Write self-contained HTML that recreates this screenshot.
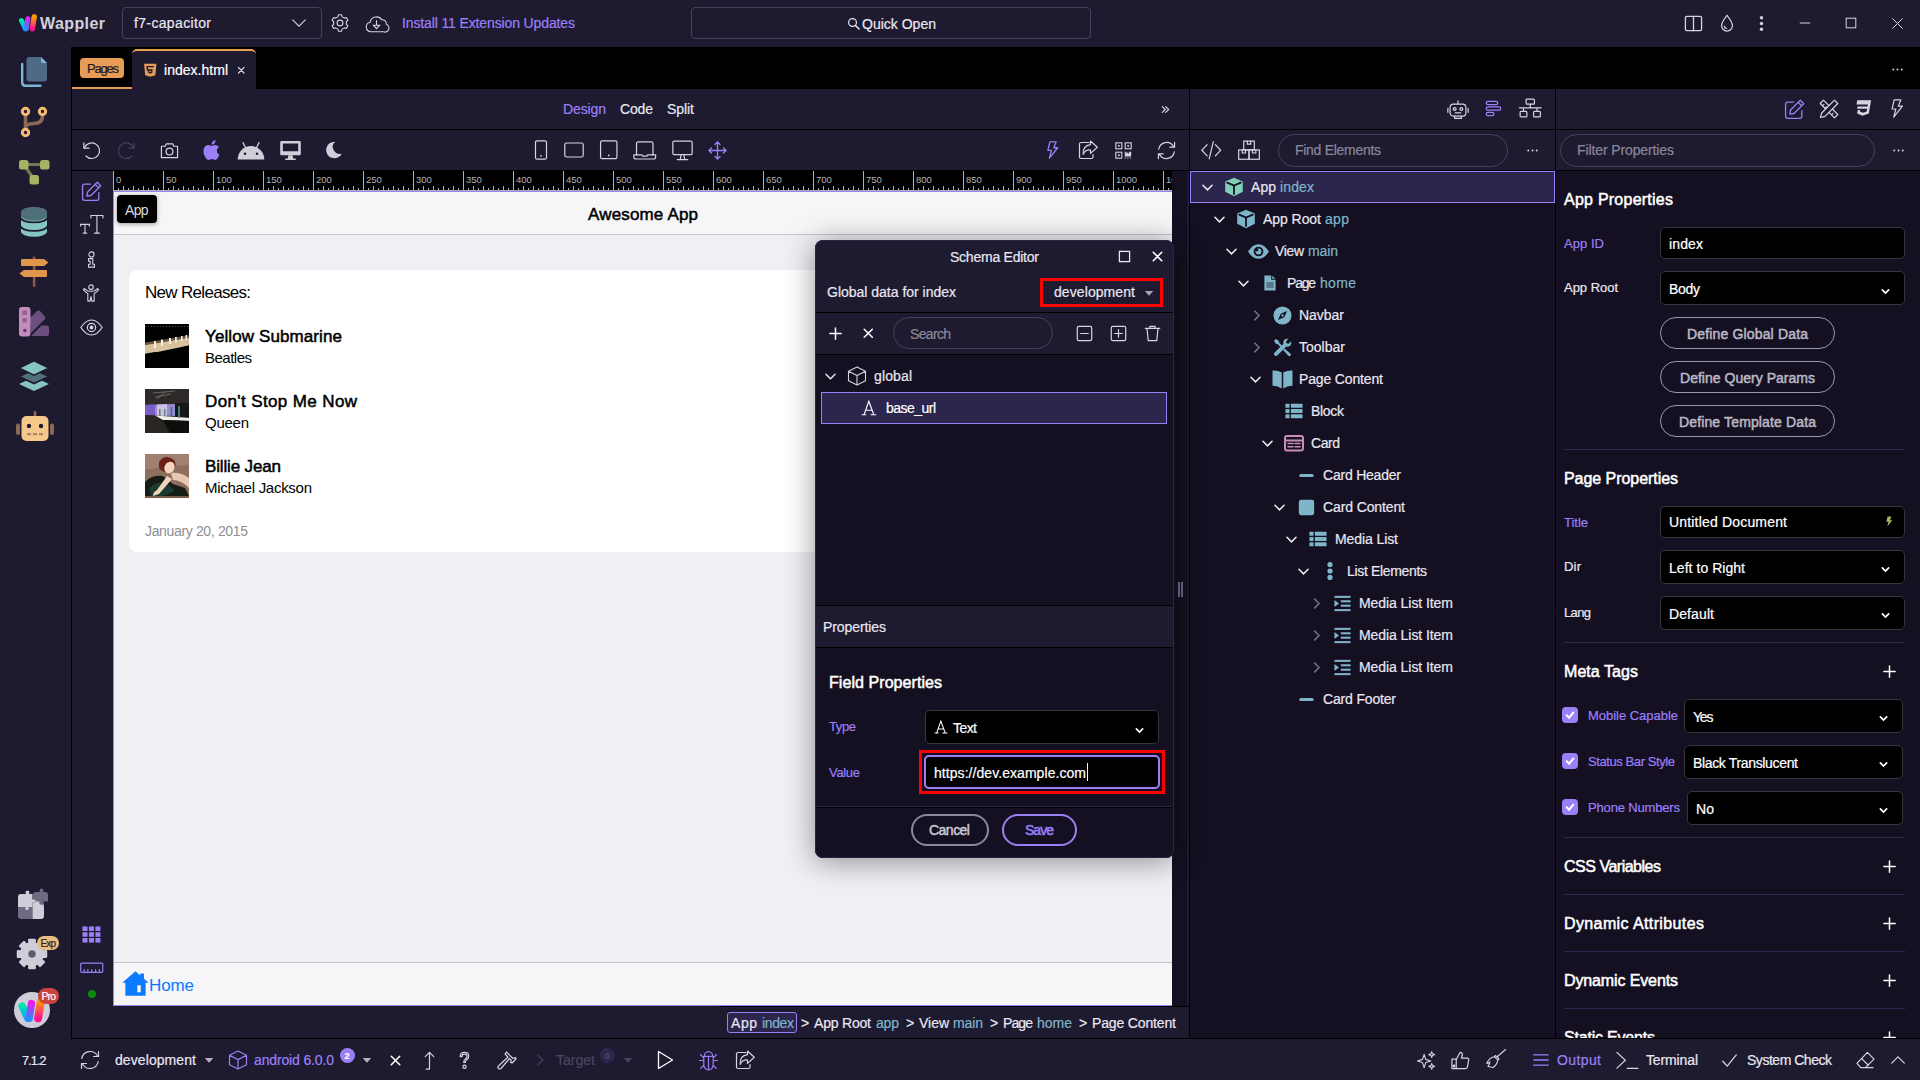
<!DOCTYPE html>
<html lang="en"><head><meta charset="utf-8"><title>Wappler</title><style>
html,body{margin:0;padding:0;}
body{width:1920px;height:1080px;overflow:hidden;background:#1e1a30;font-family:'Liberation Sans', sans-serif;position:relative;}
div,span.t,svg{position:absolute;box-sizing:border-box;}
span.t{white-space:pre;-webkit-text-stroke:0.2px currentColor;}
svg{overflow:visible;}
</style></head>
<body>
<div style="left:0px;top:0px;width:1920px;height:47px;background:#1e1a30;"></div>
<div style="left:72px;top:47px;width:1848px;height:42px;background:#000;"></div>
<div style="left:0px;top:47px;width:71px;height:1033px;background:#1e1a30;"></div>
<div style="left:71px;top:47px;width:1px;height:992px;background:#000;"></div>
<div style="left:72px;top:129px;width:1848px;height:1px;background:#000;"></div>
<div style="left:72px;top:170px;width:1848px;height:1px;background:#000;"></div>
<div style="left:72px;top:171px;width:41px;height:867px;background:#1e1a30;"></div>
<div style="left:113px;top:171px;width:1076px;height:835px;background:#141021;"></div>
<div style="left:113px;top:170px;width:1059px;height:21px;background:#000;"></div>
<div style="left:1189px;top:89px;width:1px;height:950px;background:#000;"></div>
<div style="left:1555px;top:89px;width:1px;height:950px;background:#000;"></div>
<div style="left:1190px;top:171px;width:365px;height:867px;background:#141021;"></div>
<div style="left:1556px;top:171px;width:364px;height:867px;background:#141021;"></div>
<div style="left:1187px;top:171px;width:2px;height:836px;background:#1e1a30;"></div>
<div style="left:719px;top:1006px;width:470px;height:1px;background:#000;"></div>
<div style="left:72px;top:1007px;width:1117px;height:31px;background:#1e1a30;"></div>
<div style="left:71px;top:1038px;width:1849px;height:1px;background:#000;"></div>
<div style="left:0px;top:1039px;width:1920px;height:41px;background:#1e1a30;"></div>
<span class="t" style="left:40px;top:16px;font-size:16px;line-height:16px;color:#d3d1dc;font-weight:700;letter-spacing:0.411px;-webkit-text-stroke:0;">Wappler</span>
<div style="left:122px;top:7px;width:200px;height:32px;border:1px solid #46425a;border-radius:4px;"></div>
<span class="t" style="left:134px;top:16px;font-size:14px;line-height:14px;color:#e9e7f1;letter-spacing:0.349px;">f7-capacitor</span>
<span class="t" style="left:402px;top:16px;font-size:14px;line-height:14px;color:#9b7ff7;letter-spacing:-0.126px;">Install 11 Extension Updates</span>
<div style="left:691px;top:7px;width:400px;height:32px;border:1px solid #46425a;border-radius:4px;"></div>
<span class="t" style="left:862px;top:17px;font-size:14px;line-height:14px;color:#e9e7f1;letter-spacing:0.007px;">Quick Open</span>
<div style="left:72px;top:87px;width:60px;height:2px;background:#e79c55;"></div>
<div style="left:80px;top:58px;width:44px;height:20px;background:#e79c55;border-radius:4px;"></div>
<span class="t" style="left:87px;top:62px;font-size:13px;line-height:13px;color:#1b1726;letter-spacing:-1.200px;">Pages</span>
<div style="left:132px;top:49px;width:124px;height:40px;background:#1e1a30;border-top:2px solid #e79c55;border-radius:5px 5px 0 0;"></div>
<span class="t" style="left:164px;top:63px;font-size:14px;line-height:14px;color:#fff;letter-spacing:0.021px;">index.html</span>
<span class="t" style="left:563px;top:102px;font-size:14px;line-height:14px;color:#9b7ff7;letter-spacing:-0.119px;">Design</span>
<span class="t" style="left:620px;top:102px;font-size:14px;line-height:14px;color:#e9e7f1;letter-spacing:-0.156px;">Code</span>
<span class="t" style="left:667px;top:102px;font-size:14px;line-height:14px;color:#e9e7f1;letter-spacing:-0.059px;">Split</span>
<svg style="left:113px;top:170px;overflow:hidden" width="1059" height="21"><rect x="0" y="1" width="1" height="20" fill="#b3b1a8"/><rect x="5" y="18" width="1" height="3" fill="#b3b1a8"/><rect x="10" y="16" width="1" height="5" fill="#b3b1a8"/><rect x="15" y="18" width="1" height="3" fill="#b3b1a8"/><rect x="20" y="16" width="1" height="5" fill="#b3b1a8"/><rect x="25" y="18" width="1" height="3" fill="#b3b1a8"/><rect x="30" y="16" width="1" height="5" fill="#b3b1a8"/><rect x="35" y="18" width="1" height="3" fill="#b3b1a8"/><rect x="40" y="16" width="1" height="5" fill="#b3b1a8"/><rect x="45" y="18" width="1" height="3" fill="#b3b1a8"/><rect x="50" y="1" width="1" height="20" fill="#b3b1a8"/><rect x="55" y="18" width="1" height="3" fill="#b3b1a8"/><rect x="60" y="16" width="1" height="5" fill="#b3b1a8"/><rect x="65" y="18" width="1" height="3" fill="#b3b1a8"/><rect x="70" y="16" width="1" height="5" fill="#b3b1a8"/><rect x="75" y="18" width="1" height="3" fill="#b3b1a8"/><rect x="80" y="16" width="1" height="5" fill="#b3b1a8"/><rect x="85" y="18" width="1" height="3" fill="#b3b1a8"/><rect x="90" y="16" width="1" height="5" fill="#b3b1a8"/><rect x="95" y="18" width="1" height="3" fill="#b3b1a8"/><rect x="100" y="1" width="1" height="20" fill="#b3b1a8"/><rect x="105" y="18" width="1" height="3" fill="#b3b1a8"/><rect x="110" y="16" width="1" height="5" fill="#b3b1a8"/><rect x="115" y="18" width="1" height="3" fill="#b3b1a8"/><rect x="120" y="16" width="1" height="5" fill="#b3b1a8"/><rect x="125" y="18" width="1" height="3" fill="#b3b1a8"/><rect x="130" y="16" width="1" height="5" fill="#b3b1a8"/><rect x="135" y="18" width="1" height="3" fill="#b3b1a8"/><rect x="140" y="16" width="1" height="5" fill="#b3b1a8"/><rect x="145" y="18" width="1" height="3" fill="#b3b1a8"/><rect x="150" y="1" width="1" height="20" fill="#b3b1a8"/><rect x="155" y="18" width="1" height="3" fill="#b3b1a8"/><rect x="160" y="16" width="1" height="5" fill="#b3b1a8"/><rect x="165" y="18" width="1" height="3" fill="#b3b1a8"/><rect x="170" y="16" width="1" height="5" fill="#b3b1a8"/><rect x="175" y="18" width="1" height="3" fill="#b3b1a8"/><rect x="180" y="16" width="1" height="5" fill="#b3b1a8"/><rect x="185" y="18" width="1" height="3" fill="#b3b1a8"/><rect x="190" y="16" width="1" height="5" fill="#b3b1a8"/><rect x="195" y="18" width="1" height="3" fill="#b3b1a8"/><rect x="200" y="1" width="1" height="20" fill="#b3b1a8"/><rect x="205" y="18" width="1" height="3" fill="#b3b1a8"/><rect x="210" y="16" width="1" height="5" fill="#b3b1a8"/><rect x="215" y="18" width="1" height="3" fill="#b3b1a8"/><rect x="220" y="16" width="1" height="5" fill="#b3b1a8"/><rect x="225" y="18" width="1" height="3" fill="#b3b1a8"/><rect x="230" y="16" width="1" height="5" fill="#b3b1a8"/><rect x="235" y="18" width="1" height="3" fill="#b3b1a8"/><rect x="240" y="16" width="1" height="5" fill="#b3b1a8"/><rect x="245" y="18" width="1" height="3" fill="#b3b1a8"/><rect x="250" y="1" width="1" height="20" fill="#b3b1a8"/><rect x="255" y="18" width="1" height="3" fill="#b3b1a8"/><rect x="260" y="16" width="1" height="5" fill="#b3b1a8"/><rect x="265" y="18" width="1" height="3" fill="#b3b1a8"/><rect x="270" y="16" width="1" height="5" fill="#b3b1a8"/><rect x="275" y="18" width="1" height="3" fill="#b3b1a8"/><rect x="280" y="16" width="1" height="5" fill="#b3b1a8"/><rect x="285" y="18" width="1" height="3" fill="#b3b1a8"/><rect x="290" y="16" width="1" height="5" fill="#b3b1a8"/><rect x="295" y="18" width="1" height="3" fill="#b3b1a8"/><rect x="300" y="1" width="1" height="20" fill="#b3b1a8"/><rect x="305" y="18" width="1" height="3" fill="#b3b1a8"/><rect x="310" y="16" width="1" height="5" fill="#b3b1a8"/><rect x="315" y="18" width="1" height="3" fill="#b3b1a8"/><rect x="320" y="16" width="1" height="5" fill="#b3b1a8"/><rect x="325" y="18" width="1" height="3" fill="#b3b1a8"/><rect x="330" y="16" width="1" height="5" fill="#b3b1a8"/><rect x="335" y="18" width="1" height="3" fill="#b3b1a8"/><rect x="340" y="16" width="1" height="5" fill="#b3b1a8"/><rect x="345" y="18" width="1" height="3" fill="#b3b1a8"/><rect x="350" y="1" width="1" height="20" fill="#b3b1a8"/><rect x="355" y="18" width="1" height="3" fill="#b3b1a8"/><rect x="360" y="16" width="1" height="5" fill="#b3b1a8"/><rect x="365" y="18" width="1" height="3" fill="#b3b1a8"/><rect x="370" y="16" width="1" height="5" fill="#b3b1a8"/><rect x="375" y="18" width="1" height="3" fill="#b3b1a8"/><rect x="380" y="16" width="1" height="5" fill="#b3b1a8"/><rect x="385" y="18" width="1" height="3" fill="#b3b1a8"/><rect x="390" y="16" width="1" height="5" fill="#b3b1a8"/><rect x="395" y="18" width="1" height="3" fill="#b3b1a8"/><rect x="400" y="1" width="1" height="20" fill="#b3b1a8"/><rect x="405" y="18" width="1" height="3" fill="#b3b1a8"/><rect x="410" y="16" width="1" height="5" fill="#b3b1a8"/><rect x="415" y="18" width="1" height="3" fill="#b3b1a8"/><rect x="420" y="16" width="1" height="5" fill="#b3b1a8"/><rect x="425" y="18" width="1" height="3" fill="#b3b1a8"/><rect x="430" y="16" width="1" height="5" fill="#b3b1a8"/><rect x="435" y="18" width="1" height="3" fill="#b3b1a8"/><rect x="440" y="16" width="1" height="5" fill="#b3b1a8"/><rect x="445" y="18" width="1" height="3" fill="#b3b1a8"/><rect x="450" y="1" width="1" height="20" fill="#b3b1a8"/><rect x="455" y="18" width="1" height="3" fill="#b3b1a8"/><rect x="460" y="16" width="1" height="5" fill="#b3b1a8"/><rect x="465" y="18" width="1" height="3" fill="#b3b1a8"/><rect x="470" y="16" width="1" height="5" fill="#b3b1a8"/><rect x="475" y="18" width="1" height="3" fill="#b3b1a8"/><rect x="480" y="16" width="1" height="5" fill="#b3b1a8"/><rect x="485" y="18" width="1" height="3" fill="#b3b1a8"/><rect x="490" y="16" width="1" height="5" fill="#b3b1a8"/><rect x="495" y="18" width="1" height="3" fill="#b3b1a8"/><rect x="500" y="1" width="1" height="20" fill="#b3b1a8"/><rect x="505" y="18" width="1" height="3" fill="#b3b1a8"/><rect x="510" y="16" width="1" height="5" fill="#b3b1a8"/><rect x="515" y="18" width="1" height="3" fill="#b3b1a8"/><rect x="520" y="16" width="1" height="5" fill="#b3b1a8"/><rect x="525" y="18" width="1" height="3" fill="#b3b1a8"/><rect x="530" y="16" width="1" height="5" fill="#b3b1a8"/><rect x="535" y="18" width="1" height="3" fill="#b3b1a8"/><rect x="540" y="16" width="1" height="5" fill="#b3b1a8"/><rect x="545" y="18" width="1" height="3" fill="#b3b1a8"/><rect x="550" y="1" width="1" height="20" fill="#b3b1a8"/><rect x="555" y="18" width="1" height="3" fill="#b3b1a8"/><rect x="560" y="16" width="1" height="5" fill="#b3b1a8"/><rect x="565" y="18" width="1" height="3" fill="#b3b1a8"/><rect x="570" y="16" width="1" height="5" fill="#b3b1a8"/><rect x="575" y="18" width="1" height="3" fill="#b3b1a8"/><rect x="580" y="16" width="1" height="5" fill="#b3b1a8"/><rect x="585" y="18" width="1" height="3" fill="#b3b1a8"/><rect x="590" y="16" width="1" height="5" fill="#b3b1a8"/><rect x="595" y="18" width="1" height="3" fill="#b3b1a8"/><rect x="600" y="1" width="1" height="20" fill="#b3b1a8"/><rect x="605" y="18" width="1" height="3" fill="#b3b1a8"/><rect x="610" y="16" width="1" height="5" fill="#b3b1a8"/><rect x="615" y="18" width="1" height="3" fill="#b3b1a8"/><rect x="620" y="16" width="1" height="5" fill="#b3b1a8"/><rect x="625" y="18" width="1" height="3" fill="#b3b1a8"/><rect x="630" y="16" width="1" height="5" fill="#b3b1a8"/><rect x="635" y="18" width="1" height="3" fill="#b3b1a8"/><rect x="640" y="16" width="1" height="5" fill="#b3b1a8"/><rect x="645" y="18" width="1" height="3" fill="#b3b1a8"/><rect x="650" y="1" width="1" height="20" fill="#b3b1a8"/><rect x="655" y="18" width="1" height="3" fill="#b3b1a8"/><rect x="660" y="16" width="1" height="5" fill="#b3b1a8"/><rect x="665" y="18" width="1" height="3" fill="#b3b1a8"/><rect x="670" y="16" width="1" height="5" fill="#b3b1a8"/><rect x="675" y="18" width="1" height="3" fill="#b3b1a8"/><rect x="680" y="16" width="1" height="5" fill="#b3b1a8"/><rect x="685" y="18" width="1" height="3" fill="#b3b1a8"/><rect x="690" y="16" width="1" height="5" fill="#b3b1a8"/><rect x="695" y="18" width="1" height="3" fill="#b3b1a8"/><rect x="700" y="1" width="1" height="20" fill="#b3b1a8"/><rect x="705" y="18" width="1" height="3" fill="#b3b1a8"/><rect x="710" y="16" width="1" height="5" fill="#b3b1a8"/><rect x="715" y="18" width="1" height="3" fill="#b3b1a8"/><rect x="720" y="16" width="1" height="5" fill="#b3b1a8"/><rect x="725" y="18" width="1" height="3" fill="#b3b1a8"/><rect x="730" y="16" width="1" height="5" fill="#b3b1a8"/><rect x="735" y="18" width="1" height="3" fill="#b3b1a8"/><rect x="740" y="16" width="1" height="5" fill="#b3b1a8"/><rect x="745" y="18" width="1" height="3" fill="#b3b1a8"/><rect x="750" y="1" width="1" height="20" fill="#b3b1a8"/><rect x="755" y="18" width="1" height="3" fill="#b3b1a8"/><rect x="760" y="16" width="1" height="5" fill="#b3b1a8"/><rect x="765" y="18" width="1" height="3" fill="#b3b1a8"/><rect x="770" y="16" width="1" height="5" fill="#b3b1a8"/><rect x="775" y="18" width="1" height="3" fill="#b3b1a8"/><rect x="780" y="16" width="1" height="5" fill="#b3b1a8"/><rect x="785" y="18" width="1" height="3" fill="#b3b1a8"/><rect x="790" y="16" width="1" height="5" fill="#b3b1a8"/><rect x="795" y="18" width="1" height="3" fill="#b3b1a8"/><rect x="800" y="1" width="1" height="20" fill="#b3b1a8"/><rect x="805" y="18" width="1" height="3" fill="#b3b1a8"/><rect x="810" y="16" width="1" height="5" fill="#b3b1a8"/><rect x="815" y="18" width="1" height="3" fill="#b3b1a8"/><rect x="820" y="16" width="1" height="5" fill="#b3b1a8"/><rect x="825" y="18" width="1" height="3" fill="#b3b1a8"/><rect x="830" y="16" width="1" height="5" fill="#b3b1a8"/><rect x="835" y="18" width="1" height="3" fill="#b3b1a8"/><rect x="840" y="16" width="1" height="5" fill="#b3b1a8"/><rect x="845" y="18" width="1" height="3" fill="#b3b1a8"/><rect x="850" y="1" width="1" height="20" fill="#b3b1a8"/><rect x="855" y="18" width="1" height="3" fill="#b3b1a8"/><rect x="860" y="16" width="1" height="5" fill="#b3b1a8"/><rect x="865" y="18" width="1" height="3" fill="#b3b1a8"/><rect x="870" y="16" width="1" height="5" fill="#b3b1a8"/><rect x="875" y="18" width="1" height="3" fill="#b3b1a8"/><rect x="880" y="16" width="1" height="5" fill="#b3b1a8"/><rect x="885" y="18" width="1" height="3" fill="#b3b1a8"/><rect x="890" y="16" width="1" height="5" fill="#b3b1a8"/><rect x="895" y="18" width="1" height="3" fill="#b3b1a8"/><rect x="900" y="1" width="1" height="20" fill="#b3b1a8"/><rect x="905" y="18" width="1" height="3" fill="#b3b1a8"/><rect x="910" y="16" width="1" height="5" fill="#b3b1a8"/><rect x="915" y="18" width="1" height="3" fill="#b3b1a8"/><rect x="920" y="16" width="1" height="5" fill="#b3b1a8"/><rect x="925" y="18" width="1" height="3" fill="#b3b1a8"/><rect x="930" y="16" width="1" height="5" fill="#b3b1a8"/><rect x="935" y="18" width="1" height="3" fill="#b3b1a8"/><rect x="940" y="16" width="1" height="5" fill="#b3b1a8"/><rect x="945" y="18" width="1" height="3" fill="#b3b1a8"/><rect x="950" y="1" width="1" height="20" fill="#b3b1a8"/><rect x="955" y="18" width="1" height="3" fill="#b3b1a8"/><rect x="960" y="16" width="1" height="5" fill="#b3b1a8"/><rect x="965" y="18" width="1" height="3" fill="#b3b1a8"/><rect x="970" y="16" width="1" height="5" fill="#b3b1a8"/><rect x="975" y="18" width="1" height="3" fill="#b3b1a8"/><rect x="980" y="16" width="1" height="5" fill="#b3b1a8"/><rect x="985" y="18" width="1" height="3" fill="#b3b1a8"/><rect x="990" y="16" width="1" height="5" fill="#b3b1a8"/><rect x="995" y="18" width="1" height="3" fill="#b3b1a8"/><rect x="1000" y="1" width="1" height="20" fill="#b3b1a8"/><rect x="1005" y="18" width="1" height="3" fill="#b3b1a8"/><rect x="1010" y="16" width="1" height="5" fill="#b3b1a8"/><rect x="1015" y="18" width="1" height="3" fill="#b3b1a8"/><rect x="1020" y="16" width="1" height="5" fill="#b3b1a8"/><rect x="1025" y="18" width="1" height="3" fill="#b3b1a8"/><rect x="1030" y="16" width="1" height="5" fill="#b3b1a8"/><rect x="1035" y="18" width="1" height="3" fill="#b3b1a8"/><rect x="1040" y="16" width="1" height="5" fill="#b3b1a8"/><rect x="1045" y="18" width="1" height="3" fill="#b3b1a8"/><rect x="1050" y="1" width="1" height="20" fill="#b3b1a8"/><rect x="1055" y="18" width="1" height="3" fill="#b3b1a8"/><rect x="0" y="20" width="1059" height="1" fill="#b3b1a8"/><text x="3" y="13" font-size="9.5" fill="#b5b4b8" font-family="Liberation Sans, sans-serif">0</text><text x="53" y="13" font-size="9.5" fill="#b5b4b8" font-family="Liberation Sans, sans-serif">50</text><text x="103" y="13" font-size="9.5" fill="#b5b4b8" font-family="Liberation Sans, sans-serif">100</text><text x="153" y="13" font-size="9.5" fill="#b5b4b8" font-family="Liberation Sans, sans-serif">150</text><text x="203" y="13" font-size="9.5" fill="#b5b4b8" font-family="Liberation Sans, sans-serif">200</text><text x="253" y="13" font-size="9.5" fill="#b5b4b8" font-family="Liberation Sans, sans-serif">250</text><text x="303" y="13" font-size="9.5" fill="#b5b4b8" font-family="Liberation Sans, sans-serif">300</text><text x="353" y="13" font-size="9.5" fill="#b5b4b8" font-family="Liberation Sans, sans-serif">350</text><text x="403" y="13" font-size="9.5" fill="#b5b4b8" font-family="Liberation Sans, sans-serif">400</text><text x="453" y="13" font-size="9.5" fill="#b5b4b8" font-family="Liberation Sans, sans-serif">450</text><text x="503" y="13" font-size="9.5" fill="#b5b4b8" font-family="Liberation Sans, sans-serif">500</text><text x="553" y="13" font-size="9.5" fill="#b5b4b8" font-family="Liberation Sans, sans-serif">550</text><text x="603" y="13" font-size="9.5" fill="#b5b4b8" font-family="Liberation Sans, sans-serif">600</text><text x="653" y="13" font-size="9.5" fill="#b5b4b8" font-family="Liberation Sans, sans-serif">650</text><text x="703" y="13" font-size="9.5" fill="#b5b4b8" font-family="Liberation Sans, sans-serif">700</text><text x="753" y="13" font-size="9.5" fill="#b5b4b8" font-family="Liberation Sans, sans-serif">750</text><text x="803" y="13" font-size="9.5" fill="#b5b4b8" font-family="Liberation Sans, sans-serif">800</text><text x="853" y="13" font-size="9.5" fill="#b5b4b8" font-family="Liberation Sans, sans-serif">850</text><text x="903" y="13" font-size="9.5" fill="#b5b4b8" font-family="Liberation Sans, sans-serif">900</text><text x="953" y="13" font-size="9.5" fill="#b5b4b8" font-family="Liberation Sans, sans-serif">950</text><text x="1003" y="13" font-size="9.5" fill="#b5b4b8" font-family="Liberation Sans, sans-serif">1000</text><text x="1053" y="13" font-size="9.5" fill="#b5b4b8" font-family="Liberation Sans, sans-serif">1050</text></svg>
<div style="left:113px;top:191px;width:1059px;height:815px;background:#efeff4;border:1px solid #9b7ff7;border-right:0;"></div>
<div style="left:114px;top:192px;width:1058px;height:43px;background:#f6f6f9;border-bottom:1px solid #c4c4c7;"></div>
<span class="t" style="left:588px;top:206px;font-size:17px;line-height:17px;color:#000;-webkit-text-stroke:0.5px currentColor;letter-spacing:0.163px;">Awesome App</span>
<div style="left:117px;top:195px;width:40px;height:28px;background:#000;border-radius:4px;box-shadow:0 1px 4px rgba(0,0,0,.4);"></div>
<span class="t" style="left:125px;top:203px;font-size:14px;line-height:14px;color:#dcdcdc;letter-spacing:-0.711px;-webkit-text-stroke:0;">App</span>
<div style="left:129px;top:270px;width:1027px;height:282px;background:#fff;border-radius:8px;"></div>
<span class="t" style="left:145px;top:284px;font-size:17px;line-height:17px;color:#000;letter-spacing:-0.694px;-webkit-text-stroke:0;">New Releases:</span>
<span class="t" style="left:205px;top:328px;font-size:17px;line-height:17px;color:#000;-webkit-text-stroke:0.5px currentColor;letter-spacing:0.103px;">Yellow Submarine</span>
<span class="t" style="left:205px;top:350px;font-size:15px;line-height:15px;color:#000;letter-spacing:-0.508px;-webkit-text-stroke:0;">Beatles</span>
<span class="t" style="left:205px;top:393px;font-size:17px;line-height:17px;color:#000;-webkit-text-stroke:0.5px currentColor;letter-spacing:0.380px;">Don&#x27;t Stop Me Now</span>
<span class="t" style="left:205px;top:415px;font-size:15px;line-height:15px;color:#000;letter-spacing:-0.262px;-webkit-text-stroke:0;">Queen</span>
<span class="t" style="left:205px;top:458px;font-size:17px;line-height:17px;color:#000;-webkit-text-stroke:0.5px currentColor;letter-spacing:-0.150px;">Billie Jean</span>
<span class="t" style="left:205px;top:480px;font-size:15px;line-height:15px;color:#000;letter-spacing:-0.278px;-webkit-text-stroke:0;">Michael Jackson</span>
<span class="t" style="left:145px;top:524px;font-size:14px;line-height:14px;color:#8e8e93;letter-spacing:-0.347px;-webkit-text-stroke:0;">January 20, 2015</span>
<div style="left:114px;top:962px;width:1058px;height:43px;background:#f6f6f9;border-top:1px solid #c4c4c7;"></div>
<span class="t" style="left:149px;top:977px;font-size:17px;line-height:17px;color:#0a7aff;letter-spacing:-0.120px;-webkit-text-stroke:0;">Home</span>
<div style="left:727px;top:1012px;width:70px;height:21px;background:#2c254d;border:1px solid #9b7ff7;border-radius:3px;"></div>
<span class="t" style="left:731px;top:1016px;font-size:14px;line-height:14px;color:#e9e7f1;letter-spacing:0.539px;">App</span>
<span class="t" style="left:762px;top:1016px;font-size:14px;line-height:14px;color:#7fb5c9;letter-spacing:-0.367px;">index</span>
<span class="t" style="left:801px;top:1016px;font-size:14px;line-height:14px;color:#e9e7f1;">&gt;</span>
<span class="t" style="left:814px;top:1016px;font-size:14px;line-height:14px;color:#e9e7f1;letter-spacing:-0.196px;">App Root</span>
<span class="t" style="left:876px;top:1016px;font-size:14px;line-height:14px;color:#7fb5c9;letter-spacing:-0.180px;">app</span>
<span class="t" style="left:906px;top:1016px;font-size:14px;line-height:14px;color:#e9e7f1;">&gt;</span>
<span class="t" style="left:919px;top:1016px;font-size:14px;line-height:14px;color:#e9e7f1;letter-spacing:-0.031px;">View</span>
<span class="t" style="left:953px;top:1016px;font-size:14px;line-height:14px;color:#7fb5c9;letter-spacing:-0.120px;">main</span>
<span class="t" style="left:990px;top:1016px;font-size:14px;line-height:14px;color:#e9e7f1;">&gt;</span>
<span class="t" style="left:1003px;top:1016px;font-size:14px;line-height:14px;color:#e9e7f1;letter-spacing:-0.901px;">Page</span>
<span class="t" style="left:1037px;top:1016px;font-size:14px;line-height:14px;color:#7fb5c9;letter-spacing:-0.010px;">home</span>
<span class="t" style="left:1079px;top:1016px;font-size:14px;line-height:14px;color:#e9e7f1;">&gt;</span>
<span class="t" style="left:1092px;top:1016px;font-size:14px;line-height:14px;color:#e9e7f1;letter-spacing:-0.148px;">Page Content</span>
<div style="left:1190px;top:171px;width:365px;height:32px;background:#2c254d;border:1px solid #9b7ff7;"></div>
<span class="t" style="left:1251px;top:180px;font-size:14px;line-height:14px;color:#e9e7f1;letter-spacing:0.039px;">App</span>
<span class="t" style="left:1280px;top:180px;font-size:14px;line-height:14px;color:#7fb5c9;letter-spacing:0.133px;">index</span>
<span class="t" style="left:1263px;top:212px;font-size:14px;line-height:14px;color:#e9e7f1;letter-spacing:-0.054px;">App Root</span>
<span class="t" style="left:1325px;top:212px;font-size:14px;line-height:14px;color:#7fb5c9;letter-spacing:0.320px;">app</span>
<span class="t" style="left:1275px;top:244px;font-size:14px;line-height:14px;color:#e9e7f1;letter-spacing:-0.365px;">View</span>
<span class="t" style="left:1308px;top:244px;font-size:14px;line-height:14px;color:#7fb5c9;letter-spacing:-0.120px;">main</span>
<span class="t" style="left:1287px;top:276px;font-size:14px;line-height:14px;color:#e9e7f1;letter-spacing:-1.200px;">Page</span>
<span class="t" style="left:1320px;top:276px;font-size:14px;line-height:14px;color:#7fb5c9;letter-spacing:0.323px;">home</span>
<span class="t" style="left:1299px;top:308px;font-size:14px;line-height:14px;color:#e9e7f1;letter-spacing:-0.028px;">Navbar</span>
<span class="t" style="left:1299px;top:340px;font-size:14px;line-height:14px;color:#e9e7f1;letter-spacing:0.013px;">Toolbar</span>
<span class="t" style="left:1299px;top:372px;font-size:14px;line-height:14px;color:#e9e7f1;letter-spacing:-0.148px;">Page Content</span>
<span class="t" style="left:1311px;top:404px;font-size:14px;line-height:14px;color:#e9e7f1;letter-spacing:-0.309px;">Block</span>
<span class="t" style="left:1311px;top:436px;font-size:14px;line-height:14px;color:#e9e7f1;letter-spacing:-0.453px;">Card</span>
<span class="t" style="left:1323px;top:468px;font-size:14px;line-height:14px;color:#e9e7f1;letter-spacing:-0.216px;">Card Header</span>
<span class="t" style="left:1323px;top:500px;font-size:14px;line-height:14px;color:#e9e7f1;letter-spacing:-0.116px;">Card Content</span>
<span class="t" style="left:1335px;top:532px;font-size:14px;line-height:14px;color:#e9e7f1;letter-spacing:-0.090px;">Media List</span>
<span class="t" style="left:1347px;top:564px;font-size:14px;line-height:14px;color:#e9e7f1;letter-spacing:-0.337px;">List Elements</span>
<span class="t" style="left:1359px;top:596px;font-size:14px;line-height:14px;color:#e9e7f1;letter-spacing:-0.067px;">Media List Item</span>
<span class="t" style="left:1359px;top:628px;font-size:14px;line-height:14px;color:#e9e7f1;letter-spacing:-0.067px;">Media List Item</span>
<span class="t" style="left:1359px;top:660px;font-size:14px;line-height:14px;color:#e9e7f1;letter-spacing:-0.067px;">Media List Item</span>
<span class="t" style="left:1323px;top:692px;font-size:14px;line-height:14px;color:#e9e7f1;letter-spacing:-0.170px;">Card Footer</span>
<span class="t" style="left:1295px;top:143px;font-size:14px;line-height:14px;color:#8b889b;letter-spacing:-0.290px;">Find Elements</span>
<div style="left:1278px;top:134px;width:230px;height:33px;border:1px solid #46425a;border-radius:17px;"></div>
<span class="t" style="left:1577px;top:143px;font-size:14px;line-height:14px;color:#8b889b;letter-spacing:-0.113px;">Filter Properties</span>
<div style="left:1560px;top:134px;width:315px;height:33px;border:1px solid #46425a;border-radius:17px;"></div>
<span class="t" style="left:1564px;top:192px;font-size:16px;line-height:16px;color:#fff;-webkit-text-stroke:0.5px currentColor;letter-spacing:0.243px;">App Properties</span>
<span class="t" style="left:1564px;top:237px;font-size:13px;line-height:13px;color:#9b7ff7;letter-spacing:0.050px;">App ID</span>
<div style="left:1660px;top:227px;width:245px;height:32px;background:#000;border:1px solid #37353d;border-radius:5px;"></div>
<span class="t" style="left:1669px;top:237px;font-size:14px;line-height:14px;color:#fff;letter-spacing:0.133px;">index</span>
<span class="t" style="left:1564px;top:281px;font-size:13px;line-height:13px;color:#e9e7f1;letter-spacing:-0.029px;">App Root</span>
<div style="left:1660px;top:271px;width:245px;height:34px;background:#000;border:1px solid #37353d;border-radius:5px;"></div>
<span class="t" style="left:1669px;top:282px;font-size:14px;line-height:14px;color:#fff;letter-spacing:-0.307px;">Body</span>
<div style="left:1660px;top:317px;width:175px;height:32px;border:1.5px solid #9a98a8;border-radius:16px;"></div>
<span class="t" style="left:1687px;top:327px;font-size:14px;line-height:14px;color:#b9b7c4;-webkit-text-stroke:0.5px currentColor;letter-spacing:0.159px;">Define Global Data</span>
<div style="left:1660px;top:361px;width:175px;height:32px;border:1.5px solid #9a98a8;border-radius:16px;"></div>
<span class="t" style="left:1680px;top:371px;font-size:14px;line-height:14px;color:#b9b7c4;-webkit-text-stroke:0.5px currentColor;letter-spacing:0.022px;">Define Query Params</span>
<div style="left:1660px;top:405px;width:175px;height:32px;border:1.5px solid #9a98a8;border-radius:16px;"></div>
<span class="t" style="left:1679px;top:415px;font-size:14px;line-height:14px;color:#b9b7c4;-webkit-text-stroke:0.5px currentColor;letter-spacing:0.138px;">Define Template Data</span>
<div style="left:1564px;top:449px;width:341px;height:1px;background:#2e2950;"></div>
<span class="t" style="left:1564px;top:471px;font-size:16px;line-height:16px;color:#fff;-webkit-text-stroke:0.5px currentColor;letter-spacing:-0.052px;">Page Properties</span>
<span class="t" style="left:1564px;top:516px;font-size:13px;line-height:13px;color:#9b7ff7;letter-spacing:-0.020px;">Title</span>
<div style="left:1660px;top:506px;width:245px;height:32px;background:#000;border:1px solid #37353d;border-radius:5px;"></div>
<span class="t" style="left:1669px;top:515px;font-size:14px;line-height:14px;color:#fff;letter-spacing:0.177px;">Untitled Document</span>
<span class="t" style="left:1564px;top:560px;font-size:13px;line-height:13px;color:#e9e7f1;letter-spacing:0.195px;">Dir</span>
<div style="left:1660px;top:550px;width:245px;height:34px;background:#000;border:1px solid #37353d;border-radius:5px;"></div>
<span class="t" style="left:1669px;top:561px;font-size:14px;line-height:14px;color:#fff;letter-spacing:0.042px;">Left to Right</span>
<span class="t" style="left:1564px;top:606px;font-size:13px;line-height:13px;color:#e9e7f1;letter-spacing:-0.641px;">Lang</span>
<div style="left:1660px;top:596px;width:245px;height:34px;background:#000;border:1px solid #37353d;border-radius:5px;"></div>
<span class="t" style="left:1669px;top:607px;font-size:14px;line-height:14px;color:#fff;letter-spacing:0.107px;">Default</span>
<div style="left:1564px;top:642px;width:341px;height:1px;background:#2e2950;"></div>
<span class="t" style="left:1564px;top:664px;font-size:16px;line-height:16px;color:#fff;-webkit-text-stroke:0.5px currentColor;letter-spacing:0.059px;">Meta Tags</span>
<div style="left:1562px;top:707px;width:16px;height:16px;background:#9b7ff7;border-radius:4px;"></div>
<span class="t" style="left:1588px;top:709px;font-size:13px;line-height:13px;color:#9b7ff7;letter-spacing:-0.026px;">Mobile Capable</span>
<div style="left:1684px;top:699px;width:219px;height:34px;background:#000;border:1px solid #37353d;border-radius:5px;"></div>
<span class="t" style="left:1693px;top:710px;font-size:14px;line-height:14px;color:#fff;letter-spacing:-1.200px;">Yes</span>
<div style="left:1562px;top:753px;width:16px;height:16px;background:#9b7ff7;border-radius:4px;"></div>
<span class="t" style="left:1588px;top:755px;font-size:13px;line-height:13px;color:#9b7ff7;letter-spacing:-0.415px;">Status Bar Style</span>
<div style="left:1684px;top:745px;width:219px;height:34px;background:#000;border:1px solid #37353d;border-radius:5px;"></div>
<span class="t" style="left:1693px;top:756px;font-size:14px;line-height:14px;color:#fff;letter-spacing:-0.344px;">Black Translucent</span>
<div style="left:1562px;top:799px;width:16px;height:16px;background:#9b7ff7;border-radius:4px;"></div>
<span class="t" style="left:1588px;top:801px;font-size:13px;line-height:13px;color:#9b7ff7;letter-spacing:-0.163px;">Phone Numbers</span>
<div style="left:1687px;top:791px;width:216px;height:34px;background:#000;border:1px solid #37353d;border-radius:5px;"></div>
<span class="t" style="left:1696px;top:802px;font-size:14px;line-height:14px;color:#fff;letter-spacing:0.094px;">No</span>
<div style="left:1564px;top:837px;width:341px;height:1px;background:#2e2950;"></div>
<span class="t" style="left:1564px;top:859px;font-size:16px;line-height:16px;color:#fff;-webkit-text-stroke:0.5px currentColor;letter-spacing:-0.488px;">CSS Variables</span>
<div style="left:1564px;top:894px;width:341px;height:1px;background:#2e2950;"></div>
<span class="t" style="left:1564px;top:916px;font-size:16px;line-height:16px;color:#fff;-webkit-text-stroke:0.5px currentColor;letter-spacing:0.389px;">Dynamic Attributes</span>
<div style="left:1564px;top:951px;width:341px;height:1px;background:#2e2950;"></div>
<span class="t" style="left:1564px;top:973px;font-size:16px;line-height:16px;color:#fff;-webkit-text-stroke:0.5px currentColor;letter-spacing:-0.123px;">Dynamic Events</span>
<div style="left:1564px;top:1008px;width:341px;height:1px;background:#2e2950;"></div>
<span class="t" style="left:1564px;top:1030px;font-size:16px;line-height:16px;color:#fff;-webkit-text-stroke:0.5px currentColor;letter-spacing:-0.198px;">Static Events</span>
<div style="left:815px;top:240px;width:359px;height:618px;background:#1e1a30;border-radius:8px;box-shadow:0 3px 30px rgba(0,0,0,.42);overflow:hidden;"></div>
<div style="left:815px;top:355px;width:359px;height:251px;background:#141021;"></div>
<div style="left:815px;top:648px;width:359px;height:210px;background:#141021;border-radius:0 0 8px 8px;"></div>
<div style="left:815px;top:312px;width:359px;height:1px;background:#000;"></div>
<div style="left:815px;top:354px;width:359px;height:1px;background:#000;"></div>
<div style="left:815px;top:605px;width:359px;height:1px;background:#000;"></div>
<div style="left:815px;top:647px;width:359px;height:1px;background:#000;"></div>
<div style="left:815px;top:806px;width:359px;height:1px;background:#2a2445;"></div>
<div style="left:815px;top:807px;width:359px;height:1px;background:#000;"></div>
<span class="t" style="left:950px;top:250px;font-size:14px;line-height:14px;color:#e9e7f1;letter-spacing:-0.236px;">Schema Editor</span>
<span class="t" style="left:827px;top:285px;font-size:14px;line-height:14px;color:#e9e7f1;letter-spacing:-0.010px;">Global data for index</span>
<div style="left:1040px;top:278px;width:123px;height:29px;border:3px solid #ff0000;"></div>
<span class="t" style="left:1054px;top:285px;font-size:14px;line-height:14px;color:#e9e7f1;letter-spacing:0.083px;">development</span>
<div style="left:893px;top:317px;width:160px;height:32px;border:1px solid #46425a;border-radius:16px;"></div>
<span class="t" style="left:910px;top:327px;font-size:14px;line-height:14px;color:#8b889b;letter-spacing:-0.672px;">Search</span>
<span class="t" style="left:874px;top:369px;font-size:14px;line-height:14px;color:#e9e7f1;letter-spacing:0.125px;">global</span>
<div style="left:821px;top:392px;width:346px;height:32px;background:#2c254d;border:1px solid #9b7ff7;"></div>
<span class="t" style="left:886px;top:401px;font-size:14px;line-height:14px;color:#fff;letter-spacing:-0.529px;">base_url</span>
<span class="t" style="left:823px;top:620px;font-size:14px;line-height:14px;color:#e9e7f1;letter-spacing:-0.090px;">Properties</span>
<span class="t" style="left:829px;top:675px;font-size:16px;line-height:16px;color:#fff;-webkit-text-stroke:0.5px currentColor;letter-spacing:0.064px;">Field Properties</span>
<span class="t" style="left:829px;top:720px;font-size:13px;line-height:13px;color:#9b7ff7;letter-spacing:-0.396px;">Type</span>
<div style="left:925px;top:710px;width:234px;height:34px;background:#000;border:1px solid #37353d;border-radius:5px;"></div>
<span class="t" style="left:953px;top:721px;font-size:14px;line-height:14px;color:#fff;letter-spacing:-0.562px;">Text</span>
<span class="t" style="left:829px;top:766px;font-size:13px;line-height:13px;color:#9b7ff7;letter-spacing:-0.324px;">Value</span>
<div style="left:919px;top:750px;width:246px;height:44px;border:3px solid #ff0000;"></div>
<div style="left:924px;top:755px;width:236px;height:34px;background:#000;border:2px solid #9b7ff7;border-radius:5px;"></div>
<span class="t" style="left:934px;top:766px;font-size:14px;line-height:14px;color:#fff;letter-spacing:0.059px;">https://dev.example.com</span>
<div style="left:1087px;top:763px;width:1px;height:18px;background:#fff;"></div>
<div style="left:911px;top:814px;width:78px;height:32px;border:2px solid #8b889b;border-radius:16px;"></div>
<span class="t" style="left:929px;top:823px;font-size:14px;line-height:14px;color:#c9c7d3;-webkit-text-stroke:0.5px currentColor;letter-spacing:-0.519px;">Cancel</span>
<div style="left:1002px;top:814px;width:75px;height:32px;border:2px solid #9b7ff7;border-radius:16px;"></div>
<span class="t" style="left:1025px;top:823px;font-size:14px;line-height:14px;color:#9b7ff7;-webkit-text-stroke:0.5px currentColor;letter-spacing:-0.974px;">Save</span>
<div style="left:1178px;top:582px;width:1.5px;height:15px;background:#5d5a75;"></div>
<div style="left:1181px;top:582px;width:1.5px;height:15px;background:#5d5a75;"></div>
<div style="left:815px;top:240px;width:359px;height:618px;border-radius:8px;border:1px solid #2a2547;"></div>
<svg style="left:18px;top:13px" width="21" height="20" viewBox="0 0 21 20"><defs><linearGradient id="g1" x1="0" y1="0" x2="0" y2="1"><stop offset="0" stop-color="#00e6b0"/><stop offset="1" stop-color="#00a8ff"/></linearGradient><linearGradient id="g2" x1="0" y1="0" x2="0" y2="1"><stop offset="0" stop-color="#e81df0"/><stop offset="1" stop-color="#2a8cff"/></linearGradient><linearGradient id="g3" x1="0" y1="0" x2="0" y2="1"><stop offset="0" stop-color="#ff9d00"/><stop offset="1" stop-color="#ff1290"/></linearGradient></defs><path d="M3.500 7.500 L7.300 15.800" stroke="url(#g1)" stroke-width="5" stroke-linecap="round"/><path d="M9.800 5.800 L8.300 15.800" stroke="url(#g2)" stroke-width="5" stroke-linecap="round"/><path d="M16.200 4 L14.300 15.800" stroke="url(#g3)" stroke-width="5.400" stroke-linecap="round"/></svg>
<svg style="left:290.0px;top:14.0px;color:#d6d4df;" width="18" height="18" viewBox="0 0 20 20" fill="none" stroke="currentColor" stroke-width="1.222" stroke-linecap="round"><path d="M3 6.5 L10 13.5 L17 6.5"/></svg>
<svg style="left:331.0px;top:14.0px;color:#d6d4df;" width="18" height="18" viewBox="0 0 20 20" fill="none" stroke="currentColor" stroke-width="1.222" stroke-linecap="round"><path d="M7.70 3.18 L8.26 0.86 L11.74 0.86 L12.30 3.18 L14.76 4.60 L17.04 3.92 L18.78 6.94 L17.06 8.58 L17.06 11.42 L18.78 13.06 L17.04 16.08 L14.76 15.40 L12.30 16.82 L11.74 19.14 L8.26 19.14 L7.70 16.82 L5.24 15.40 L2.96 16.08 L1.22 13.06 L2.94 11.42 L2.94 8.58 L1.22 6.94 L2.96 3.92 L5.24 4.60Z" stroke-linejoin="round"/><circle cx="10" cy="10" r="3.2"/></svg>
<svg style="left:365.0px;top:11.5px;color:#d6d4df;" width="23" height="23" viewBox="0 0 20 20" fill="none" stroke="currentColor" stroke-width="0.957" stroke-linecap="round"><path d="M5.2 17.2 A4.2 4.2 0 0 1 4.4 8.9 A5.6 5.6 0 0 1 14.6 6.8 A3.6 3.6 0 0 1 18.6 10.6 A3.4 3.4 0 0 1 16 17.2 Z"/><path d="M10 7.5 V11.5 M7.3 11.5 H12.7 L10 14.5 Z"/></svg>
<svg style="left:846.5px;top:16.5px;color:#e9e7f1;" width="13" height="13" viewBox="0 0 20 20" fill="none" stroke="currentColor" stroke-width="1.846" stroke-linecap="round"><circle cx="8.5" cy="8.5" r="6"/><path d="M13 13 L18.5 18.5" stroke-width="2.4"/></svg>
<svg style="left:1683.5px;top:13.5px;color:#d6d4df;" width="19" height="19" viewBox="0 0 20 20" fill="none" stroke="currentColor" stroke-width="1.368" stroke-linecap="round"><rect x="1.5" y="2.5" width="17" height="15" rx="1.5"/><path d="M10 2.5 V17.5"/></svg>
<svg style="left:1718.0px;top:14.0px;color:#d6d4df;" width="18" height="18" viewBox="0 0 20 20" fill="none" stroke="currentColor" stroke-width="1.333" stroke-linecap="round"><path d="M10 1.5 C10 1.5 4 9 4 13 A6 6 0 0 0 16 13 C16 9 10 1.5 10 1.5 Z"/><path d="M7 13.5 A3 3 0 0 0 9.5 16"/></svg>
<svg style="left:1752.5px;top:14.5px;color:#d6d4df;" width="17" height="17" viewBox="0 0 20 20" fill="currentColor"><circle cx="10" cy="3.2" r="2"/><circle cx="10" cy="10" r="2"/><circle cx="10" cy="16.8" r="2"/></svg>
<svg style="left:1797.0px;top:15.0px;color:#d6d4df;" width="16" height="16" viewBox="0 0 20 20" fill="none" stroke="currentColor" stroke-width="1.250" stroke-linecap="round"><path d="M4 10 H16"/></svg>
<svg style="left:1843.0px;top:15.0px;color:#d6d4df;" width="16" height="16" viewBox="0 0 20 20" fill="none" stroke="currentColor" stroke-width="1.250" stroke-linecap="round"><rect x="4" y="4" width="12" height="12"/></svg>
<svg style="left:1889.5px;top:15.5px;color:#d6d4df;" width="15" height="15" viewBox="0 0 20 20" fill="none" stroke="currentColor" stroke-width="1.333" stroke-linecap="round"><path d="M3.5 3.5 L16.5 16.5 M16.5 3.5 L3.5 16.5"/></svg>
<svg style="left:142.8px;top:62.8px;color:#e79c55;" width="14.5" height="14.5" viewBox="0 0 20 20" stroke-width="1.655" stroke-linecap="round"><path d="M1.5 1 H18.5 L17 16.8 L10 19 L3 16.8 Z" fill="currentColor"/><path d="M14.3 5 H5.700 L6.100 9.600 H12.200 L11.900 13 L10 13.600 L8.100 13 L8 11.800" fill="none" stroke="#1e1a30" stroke-width="1.900"/></svg>
<svg style="left:236.6px;top:66.0px;color:#d6d4df;" width="8.5" height="8.5" viewBox="0 0 20 20" fill="none" stroke="currentColor" stroke-width="2.824" stroke-linecap="round"><path d="M3.5 3.5 L16.5 16.5 M16.5 3.5 L3.5 16.5"/></svg>
<svg style="left:1890.5px;top:62.5px;color:#d6d4df;" width="13" height="13" viewBox="0 0 20 20" fill="currentColor"><circle cx="3.5" cy="10" r="1.5"/><circle cx="10" cy="10" r="1.5"/><circle cx="16.5" cy="10" r="1.5"/></svg>
<svg style="left:1161.0px;top:104.5px;color:#d6d4df;" width="9" height="9" viewBox="0 0 20 20" fill="none" stroke="currentColor" stroke-width="2.667" stroke-linecap="round"><path d="M3 3.5 L9.5 10 L3 16.5 M10.5 3.5 L17 10 L10.5 16.5"/></svg>
<svg style="left:1447.0px;top:98.0px;color:#d6d4df;" width="22" height="22" viewBox="0 0 20 20" fill="none" stroke="currentColor" stroke-width="1.091" stroke-linecap="round"><rect x="2.800" y="5.500" width="14.400" height="11" rx="3"/><path d="M10 5.500 V2.500 M0.800 9.500 V13 M19.200 9.500 V13 M7 16.500 V18.500 H13 V16.500"/><circle cx="7" cy="10" r="1.300"/><circle cx="13" cy="10" r="1.300"/><path d="M7.500 13.500 H12.500"/></svg>
<svg style="left:1484.5px;top:99.5px;color:#9b7ff7;" width="17" height="17" viewBox="0 0 20 20" fill="none" stroke="currentColor" stroke-width="1.529" stroke-linecap="round"><rect x="1.500" y="1.500" width="13.500" height="4" rx="2"/><rect x="1.500" y="8" width="17" height="4" rx="2"/><rect x="1.500" y="14.500" width="9" height="4" rx="2"/></svg>
<svg style="left:1518.8px;top:97.2px;color:#d6d4df;" width="22.5" height="22.5" viewBox="0 0 20 20" fill="none" stroke="currentColor" stroke-width="1.067" stroke-linecap="round"><rect x="6.300" y="1.800" width="7.400" height="4.600" rx="0.800"/><rect x="1" y="12.800" width="6" height="4.800" rx="0.800"/><rect x="13" y="12.800" width="6" height="4.800" rx="0.800"/><path d="M10 6.400 V9.600 M0.300 9.600 H19.700 M4 9.600 V12.800 M16 9.600 V12.800"/></svg>
<svg style="left:1783.5px;top:98.5px;color:#9b7ff7;" width="21" height="21" viewBox="0 0 20 20" fill="none" stroke="currentColor" stroke-width="1.238" stroke-linecap="round"><path d="M9 3 H3.500 Q1.500 3 1.500 5 V16.500 Q1.500 18.500 3.500 18.500 H15 Q17 18.500 17 16.500 V11"/><path d="M15.500 1.200 L18.800 4.500 L9.500 13.800 L5.600 14.400 L6.200 10.500 Z M13.500 3.200 L16.800 6.500" stroke-linejoin="round"/></svg>
<svg style="left:1819.0px;top:99.0px;color:#d6d4df;" width="20" height="20" viewBox="0 0 20 20" fill="none" stroke="currentColor" stroke-width="1.200" stroke-linecap="round"><path d="M1.200 4.500 L4.500 1.200 L18.800 15.500 L15.500 18.800 Z M3.500 6.800 L5 5.300 M6 9.300 L7.500 7.800 M12.500 15.800 L14 14.300" stroke-linejoin="round"/><path d="M15.500 1.200 L18.800 4.500 L6 17.300 L1.500 18.500 L2.700 14 Z" stroke-linejoin="round" fill="#1e1a30"/></svg>
<svg style="left:1854.0px;top:99.0px;color:#d6d4df;" width="18" height="18" viewBox="0 0 20 20" fill="currentColor"><path d="M3.500 1.500 H19 L16.500 16 L9.500 18.500 L3.500 16 L4.200 12.300 H6.800 L6.500 14 L10 15.400 L14 14 L14.600 10.800 H3.500 L4 8.200 H15 L15.400 6.200 H2.800 Z"/></svg>
<svg style="left:1888.0px;top:99.0px;color:#d6d4df;" width="19" height="19" viewBox="0 0 20 20" fill="none" stroke="currentColor" stroke-width="1.263" stroke-linecap="round"><path d="M6.500 1 H13.500 L10.800 7.500 H15.200 L6 19 L8.300 10.500 H4.300 Z" stroke-linejoin="round"/></svg>
<svg style="left:82.0px;top:140.5px;color:#d6d4df;" width="19" height="19" viewBox="0 0 20 20" fill="none" stroke="currentColor" stroke-width="1.263" stroke-linecap="round"><path d="M2 2 V7.5 H7.5" /><path d="M2.6 7.2 A8.2 8.2 0 1 1 4.2 15.8"/></svg>
<svg style="left:116.5px;top:140.5px;color:#464160;" width="19" height="19" viewBox="0 0 20 20" fill="none" stroke="currentColor" stroke-width="1.263" stroke-linecap="round"><path d="M18 2 V7.5 H12.5" /><path d="M17.4 7.2 A8.2 8.2 0 1 0 15.8 15.8"/></svg>
<svg style="left:159.5px;top:140.5px;color:#d6d4df;" width="19" height="19" viewBox="0 0 20 20" fill="none" stroke="currentColor" stroke-width="1.263" stroke-linecap="round"><path d="M1.5 5.5 H5.5 L6.5 3 H13.5 L14.5 5.5 H18.5 V17.5 H1.5 Z" stroke-linejoin="round"/><circle cx="10" cy="11" r="3.6"/></svg>
<svg style="left:201.5px;top:140.0px;color:#9b7ff7;" width="20" height="20" viewBox="0 0 20 20" fill="currentColor"><path d="M14.9 10.6 c0-2.5 2-3.6 2.1-3.7 c-1.2-1.7-3-1.9-3.600-2 c-1.500-0.200-3 0.900-3.700 0.900 c-0.800 0-2-0.900-3.300-0.800 c-1.700 0-3.200 1-4.100 2.500 c-1.700 3-0.500 7.500 1.200 9.900 c0.800 1.200 1.800 2.500 3.100 2.500 c1.200 0 1.700-0.800 3.200-0.800 c1.500 0 1.900 0.800 3.200 0.800 c1.300 0 2.200-1.200 3-2.400 c0.900-1.400 1.300-2.700 1.400-2.800 c0 0-2.500-1-2.500-4.100 z M12.500 3.300 c0.700-0.800 1.100-2 1-3.100 c-1 0-2.200 0.600-2.900 1.500 c-0.600 0.700-1.200 1.900-1 3 c1.100 0.100 2.200-0.600 2.900-1.400 z"/></svg>
<svg style="left:236.5px;top:136.5px;color:#d0ced9;" width="28" height="28" viewBox="0 0 20 20" stroke-width="0.857" stroke-linecap="round"><path d="M0.500 16 A9.500 9.500 0 0 1 19.500 16 Z" fill="currentColor"/><path d="M4.300 4 L6 7.500 M15.700 4 L14 7.500" stroke="currentColor" stroke-width="0.9" fill="none"/><circle cx="5.700" cy="12" r="0.9" fill="#1e1a30"/><circle cx="14.300" cy="12" r="0.9" fill="#1e1a30"/></svg>
<svg style="left:279.5px;top:139.5px;color:#d0ced9;" width="21" height="21" viewBox="0 0 20 20" stroke-width="1.143" stroke-linecap="round"><path d="M1.500 1 H18.500 Q19.800 1 19.800 2.300 V13.300 Q19.800 14.600 18.500 14.600 H1.500 Q0.200 14.600 0.200 13.300 V2.300 Q0.200 1 1.500 1 Z M2.700 3.300 V10.600 H17.300 V3.300 Z" fill="currentColor" fill-rule="evenodd"/><path d="M8 14.600 H12 L12.600 17.500 H15 V19 H5 V17.500 H7.400 Z" fill="currentColor"/></svg>
<svg style="left:325.5px;top:141.0px;color:#d0ced9;" width="18" height="18" viewBox="0 0 20 20" fill="currentColor"><path d="M10.23 0.85 A9.2 9.2 0 1 0 17.69 13.78 A7.6 7.6 0 0 1 10.23 0.85 Z"/></svg>
<svg style="left:530.5px;top:140.0px;color:#d6d4df;" width="20" height="20" viewBox="0 0 20 20" stroke-width="1.200" stroke-linecap="round"><rect x="4.500" y="0.800" width="11" height="18.400" rx="1.500" fill="none" stroke="currentColor"/><circle cx="10" cy="15.800" r="0.900" fill="currentColor"/></svg>
<svg style="left:564.0px;top:140.0px;color:#d6d4df;" width="20" height="20" viewBox="0 0 20 20" fill="none" stroke="currentColor" stroke-width="1.200" stroke-linecap="round"><rect x="0.800" y="3" width="18.400" height="14" rx="1.800"/></svg>
<svg style="left:599.2px;top:140.2px;color:#d6d4df;" width="19.5" height="19.5" viewBox="0 0 20 20" stroke-width="1.231" stroke-linecap="round"><rect x="1.600" y="0.800" width="16.800" height="18.400" rx="1.500" fill="none" stroke="currentColor"/><circle cx="10" cy="15.800" r="0.900" fill="currentColor"/></svg>
<svg style="left:632.8px;top:138.8px;color:#d6d4df;" width="23.5" height="23.5" viewBox="0 0 20 20" fill="none" stroke="currentColor" stroke-width="1.021" stroke-linecap="round"><path d="M3 13.500 V3.800 Q3 2.500 4.300 2.500 H15.700 Q17 2.500 17 3.800 V13.500"/><path d="M0.700 13.500 H7.500 L8.200 14.500 H11.800 L12.500 13.500 H19.300 V15 Q19.300 17 17.300 17 H2.700 Q0.700 17 0.700 15 Z" stroke-linejoin="round"/></svg>
<svg style="left:671.5px;top:139.5px;color:#d6d4df;" width="21" height="21" viewBox="0 0 20 20" fill="none" stroke="currentColor" stroke-width="1.143" stroke-linecap="round"><rect x="0.800" y="1" width="18.400" height="13" rx="1.500"/><path d="M8.700 14 L8 18 M11.300 14 L12 18 M5 18.600 H15"/></svg>
<svg style="left:707.5px;top:140.5px;color:#9b7ff7;" width="19" height="19" viewBox="0 0 20 20" fill="none" stroke="currentColor" stroke-width="1.368" stroke-linecap="round"><path d="M10 1 V19 M1 10 H19 M7.300 3.700 L10 1 L12.700 3.700 M7.300 16.300 L10 19 L12.700 16.300 M3.700 7.300 L1 10 L3.700 12.700 M16.300 7.300 L19 10 L16.300 12.700"/></svg>
<svg style="left:1043.5px;top:141.0px;color:#9b7ff7;" width="18" height="18" viewBox="0 0 20 20" fill="none" stroke="currentColor" stroke-width="1.444" stroke-linecap="round"><path d="M6.500 1 H13.500 L10.800 7.500 H15.200 L6 19 L8.300 10.500 H4.300 Z" stroke-linejoin="round"/></svg>
<svg style="left:1078.0px;top:140.0px;color:#d6d4df;" width="20" height="20" viewBox="0 0 20 20" fill="none" stroke="currentColor" stroke-width="1.200" stroke-linecap="round"><path d="M11 2.500 H3 Q1.500 2.500 1.500 4 V17 Q1.500 18.500 3 18.500 H13.500 Q15 18.500 15 17 V14.500"/><path d="M12.500 1 L19.300 7.200 L12.500 13.400 V10 Q7 9.600 5.200 14.500 Q4.500 5.500 12.500 4.600 Z" stroke-linejoin="round"/></svg>
<svg style="left:1114.5px;top:141.5px;color:#d6d4df;" width="17" height="17" viewBox="0 0 20 20" stroke-width="1.294" stroke-linecap="round"><g fill="none" stroke="currentColor"><rect x="1" y="1" width="7" height="7"/><rect x="12" y="1" width="7" height="7"/><rect x="1" y="12" width="7" height="7"/></g><g fill="currentColor"><rect x="3.500" y="3.500" width="2" height="2"/><rect x="14.500" y="3.500" width="2" height="2"/><rect x="3.500" y="14.500" width="2" height="2"/><path d="M11.500 11.500 H13.500 V14 L15 12 L16.500 14 V11.500 H19 V17 H11.500 Z"/><rect x="11.500" y="18.200" width="1.300" height="1.300"/><rect x="14.500" y="18.200" width="1.300" height="1.300"/><rect x="17.500" y="18.200" width="1.300" height="1.300"/></g></svg>
<svg style="left:1156.5px;top:140.5px;color:#d6d4df;" width="19" height="19" viewBox="0 0 20 20" fill="none" stroke="currentColor" stroke-width="1.263" stroke-linecap="round"><path d="M1.800 8.500 A8.400 8.400 0 0 1 17.500 6 M18.500 1.500 V6.500 H13.500"/><path d="M18.200 11.500 A8.400 8.400 0 0 1 2.500 14 M1.500 18.500 V13.500 H6.500"/></svg>
<svg style="left:1200.8px;top:139.8px;color:#d6d4df;" width="20.5" height="20.5" viewBox="0 0 20 20" fill="none" stroke="currentColor" stroke-width="1.171" stroke-linecap="round"><path d="M6 4.500 L0.800 10 L6 15.500 M14 4.500 L19.200 10 L14 15.500 M12 1.500 L8 18.500"/></svg>
<svg style="left:1237.5px;top:139.5px;color:#d6d4df;" width="22" height="22" viewBox="0 0 20 20" fill="none" stroke="currentColor" stroke-width="1.091" stroke-linecap="round"><rect x="5.200" y="1" width="9.600" height="8"/><rect x="0.600" y="9" width="9.400" height="8.500"/><rect x="10" y="9" width="9.400" height="8.500"/><path d="M8.500 1 V3.800 H11.500 V1 M3.800 9 V11.800 H6.800 V9 M13.200 9 V11.800 H16.200 V9"/></svg>
<svg style="left:1525.5px;top:143.5px;color:#d6d4df;" width="13" height="13" viewBox="0 0 20 20" fill="currentColor"><circle cx="3.5" cy="10" r="1.5"/><circle cx="10" cy="10" r="1.5"/><circle cx="16.5" cy="10" r="1.5"/></svg>
<svg style="left:1891.5px;top:143.5px;color:#d6d4df;" width="13" height="13" viewBox="0 0 20 20" fill="currentColor"><circle cx="3.5" cy="10" r="1.5"/><circle cx="10" cy="10" r="1.5"/><circle cx="16.5" cy="10" r="1.5"/></svg>
<svg style="left:80.5px;top:180.5px;color:#9b7ff7;" width="21" height="21" viewBox="0 0 20 20" fill="none" stroke="currentColor" stroke-width="1.238" stroke-linecap="round"><path d="M9 3 H3.500 Q1.500 3 1.500 5 V16.500 Q1.500 18.500 3.500 18.500 H15 Q17 18.500 17 16.500 V11"/><path d="M15.500 1.200 L18.800 4.500 L9.500 13.800 L5.600 14.400 L6.200 10.500 Z M13.500 3.200 L16.800 6.500" stroke-linejoin="round"/></svg>
<svg style="left:79.8px;top:212.2px;color:#d6d4df;" width="23.5" height="23.5" viewBox="0 0 20 20" fill="none" stroke="currentColor" stroke-width="0.936" stroke-linecap="round"><path d="M0.500 12 V10.500 H8 V12 M4.250 10.500 V18 M2.800 18 H5.700 M9.300 5 V3 H19.500 V5 M14.400 3 V18 M12.300 18 H16.500"/></svg>
<svg style="left:82.5px;top:250.5px;color:#d6d4df;" width="17" height="17" viewBox="0 0 20 20" fill="none" stroke="currentColor" stroke-width="1.294" stroke-linecap="round"><circle cx="10" cy="4" r="3"/><path d="M6.500 9 H11.500 V15.500 H13.500 V19 H6.500 V15.500 H8.500 V12 H6.500 Z" stroke-linejoin="round"/></svg>
<svg style="left:82.0px;top:284.0px;color:#d6d4df;" width="18" height="18" viewBox="0 0 20 20" fill="none" stroke="currentColor" stroke-width="1.222" stroke-linecap="round"><circle cx="10" cy="3.500" r="2.500"/><path d="M2.500 5 Q6 8 7.500 8 H12.500 Q14 8 17.500 5 L18.500 6.500 Q15 10 13.500 10.500 V19 H11 L10 14 L9 19 H6.500 V10.500 Q5 10 1.500 6.500 Z" stroke-linejoin="round"/></svg>
<svg style="left:79.5px;top:315.5px;color:#d6d4df;" width="23" height="23" viewBox="0 0 20 20" fill="none" stroke="currentColor" stroke-width="1.043" stroke-linecap="round"><path d="M0.800 10 Q5 3.500 10 3.500 Q15 3.500 19.200 10 Q15 16.500 10 16.500 Q5 16.500 0.800 10 Z"/><circle cx="10" cy="10" r="3.600"/><circle cx="10" cy="10" r="1.200" fill="currentColor"/></svg>
<svg style="left:81.5px;top:924.5px;color:#9b7ff7;" width="19" height="19" viewBox="0 0 20 20" fill="currentColor"><rect x="0.500" y="1.500" width="5.300" height="4.800"/><rect x="7.300" y="1.500" width="5.300" height="4.800"/><rect x="14.100" y="1.500" width="5.300" height="4.800"/><rect x="0.500" y="7.600" width="5.300" height="4.800"/><rect x="7.300" y="7.600" width="5.300" height="4.800"/><rect x="14.100" y="7.600" width="5.300" height="4.800"/><rect x="0.500" y="13.700" width="5.300" height="4.800"/><rect x="7.300" y="13.700" width="5.300" height="4.800"/><rect x="14.100" y="13.700" width="5.300" height="4.800"/></svg>
<svg style="left:79.8px;top:956.2px;color:#9b7ff7;" width="23.5" height="23.5" viewBox="0 0 20 20" fill="none" stroke="currentColor" stroke-width="1.021" stroke-linecap="round"><rect x="0.600" y="6" width="18.800" height="8" rx="1"/><path d="M3.500 14 V11.500 M6.700 14 V11.500 M10 14 V11.500 M13.300 14 V11.500 M16.500 14 V11.500"/></svg>
<div style="left:88px;top:990px;width:8px;height:8px;background:#0a8a0a;border-radius:4px;"></div>
<svg style="left:1200.5px;top:180.5px;color:#e9e7f1;" width="13" height="13" viewBox="0 0 20 20" fill="none" stroke="currentColor" stroke-width="2.462" stroke-linecap="round"><path d="M3 6.5 L10 13.5 L17 6.5"/></svg>
<svg style="left:1224.0px;top:177.0px;color:#7fd0b8;" width="20" height="20" viewBox="0 0 20 20" stroke-width="1.200" stroke-linecap="round"><path d="M10 0.800 L18.800 4.600 V14.800 L10 19.200 L1.200 14.800 V4.600 Z" fill="currentColor"/><path d="M3.200 5.600 L10 8.600 L16.800 5.600 M10 8.600 V17" fill="none" stroke="#141021" stroke-width="1.800"/></svg>
<svg style="left:1212.5px;top:212.5px;color:#e9e7f1;" width="13" height="13" viewBox="0 0 20 20" fill="none" stroke="currentColor" stroke-width="2.462" stroke-linecap="round"><path d="M3 6.5 L10 13.5 L17 6.5"/></svg>
<svg style="left:1236.0px;top:209.0px;color:#7fb5c9;" width="20" height="20" viewBox="0 0 20 20" stroke-width="1.200" stroke-linecap="round"><path d="M10 0.800 L18.800 4.600 V14.800 L10 19.200 L1.200 14.800 V4.600 Z" fill="currentColor"/><path d="M3.200 5.600 L10 8.600 L16.800 5.600 M10 8.600 V17" fill="none" stroke="#141021" stroke-width="1.800"/></svg>
<svg style="left:1224.5px;top:244.5px;color:#e9e7f1;" width="13" height="13" viewBox="0 0 20 20" fill="none" stroke="currentColor" stroke-width="2.462" stroke-linecap="round"><path d="M3 6.5 L10 13.5 L17 6.5"/></svg>
<svg style="left:1247.5px;top:240.5px;color:#7fb5c9;" width="21" height="21" viewBox="0 0 20 20" stroke-width="1.143" stroke-linecap="round"><path d="M0 10 Q4.500 3 10 3 Q15.500 3 20 10 Q15.500 17 10 17 Q4.500 17 0 10 Z" fill="currentColor"/><circle cx="10" cy="10" r="4.600" fill="#141021"/><circle cx="10" cy="10" r="2.800" fill="currentColor"/><circle cx="8.600" cy="8.600" r="1.300" fill="#141021"/></svg>
<svg style="left:1236.5px;top:276.5px;color:#e9e7f1;" width="13" height="13" viewBox="0 0 20 20" fill="none" stroke="currentColor" stroke-width="2.462" stroke-linecap="round"><path d="M3 6.5 L10 13.5 L17 6.5"/></svg>
<svg style="left:1262.0px;top:275.0px;color:#7fb5c9;" width="16" height="16" viewBox="0 0 20 20" stroke-width="1.500" stroke-linecap="round"><path d="M3 0.500 H11.500 V6 H17 V19.500 H3 Z M12.800 0.800 L16.700 4.700 H12.800 Z" fill="currentColor"/><path d="M6 10 H14 M6 12.500 H14 M6 15 H14" stroke="#141021" stroke-width="0.900"/></svg>
<svg style="left:1249.5px;top:308.5px;color:#7a7790;" width="13" height="13" viewBox="0 0 20 20" fill="none" stroke="currentColor" stroke-width="2.154" stroke-linecap="round"><path d="M7 3 L14 10 L7 17"/></svg>
<svg style="left:1272.5px;top:305.5px;color:#7fb5c9;" width="19" height="19" viewBox="0 0 20 20" stroke-width="1.263" stroke-linecap="round"><circle cx="10" cy="10" r="9.500" fill="currentColor"/><path d="M14.800 5.200 L11.800 11.800 L5.200 14.800 L8.200 8.200 Z" fill="#141021"/><circle cx="10" cy="10" r="1.200" fill="currentColor"/></svg>
<svg style="left:1249.5px;top:340.5px;color:#7a7790;" width="13" height="13" viewBox="0 0 20 20" fill="none" stroke="currentColor" stroke-width="2.154" stroke-linecap="round"><path d="M7 3 L14 10 L7 17"/></svg>
<svg style="left:1272.5px;top:337.5px;color:#7fb5c9;" width="19" height="19" viewBox="0 0 20 20" stroke-width="1.263" stroke-linecap="round"><path d="M1 3 L3 1 L6 3 L6.500 5 L10.500 9 L9 10.500 L5 6.500 L3 6 Z" fill="currentColor"/><path d="M12 11 L18.500 16.500 Q19.500 18 18 19 Q17 19.500 16 18.500 L10.500 12.500 Z" fill="currentColor"/><path d="M19 3.500 L16.500 6 L14 5.500 L13.800 3.300 L16.200 0.900 Q13.500 0.200 11.800 2 Q10.300 3.700 11 6 L1.500 15.500 Q0.500 17 1.700 18.300 Q3 19.500 4.500 18.500 L14 9 Q16.300 9.700 18 8.200 Q19.800 6.300 19 3.500 Z" fill="currentColor"/></svg>
<svg style="left:1248.5px;top:372.5px;color:#e9e7f1;" width="13" height="13" viewBox="0 0 20 20" fill="none" stroke="currentColor" stroke-width="2.462" stroke-linecap="round"><path d="M3 6.5 L10 13.5 L17 6.5"/></svg>
<svg style="left:1271.5px;top:368.5px;color:#7fb5c9;" width="21" height="21" viewBox="0 0 20 20" stroke-width="1.143" stroke-linecap="round"><path d="M9.300 3.300 Q5.500 1.200 0.500 1.500 V16 Q5.500 15.800 9.300 18.500 Z M10.700 3.300 Q14.500 1.200 19.500 1.500 V16 Q14.500 15.800 10.700 18.500 Z" fill="currentColor"/></svg>
<svg style="left:1285.0px;top:402.0px;color:#7fb5c9;" width="18" height="18" viewBox="0 0 20 20" fill="currentColor"><rect x="0.500" y="2" width="4.500" height="4.400" rx="0.600"/><rect x="6.500" y="2" width="13" height="4.400" rx="0.600"/><rect x="0.500" y="7.800" width="4.500" height="4.400" rx="0.600"/><rect x="6.500" y="7.800" width="13" height="4.400" rx="0.600"/><rect x="0.500" y="13.600" width="4.500" height="4.400" rx="0.600"/><rect x="6.500" y="13.600" width="13" height="4.400" rx="0.600"/></svg>
<svg style="left:1260.5px;top:436.5px;color:#e9e7f1;" width="13" height="13" viewBox="0 0 20 20" fill="none" stroke="currentColor" stroke-width="2.462" stroke-linecap="round"><path d="M3 6.5 L10 13.5 L17 6.5"/></svg>
<svg style="left:1284.0px;top:433.0px;color:#c98cb8;" width="20" height="20" viewBox="0 0 20 20" stroke-width="1.200" stroke-linecap="round"><rect x="1" y="3" width="18" height="14.500" rx="2" fill="none" stroke="currentColor" stroke-width="2"/><path d="M1 7.500 H19" stroke="currentColor" stroke-width="2"/><path d="M4 10.500 H9 M11 10.500 H16 M4 13.800 H9 M11 13.800 H16" stroke="currentColor" stroke-width="1.600"/></svg>
<svg style="left:1297.5px;top:466.5px;color:#7fb5c9;" width="17" height="17" viewBox="0 0 20 20" fill="currentColor"><rect x="1.500" y="8.200" width="17" height="3.600" rx="1.800"/></svg>
<svg style="left:1272.5px;top:500.5px;color:#e9e7f1;" width="13" height="13" viewBox="0 0 20 20" fill="none" stroke="currentColor" stroke-width="2.462" stroke-linecap="round"><path d="M3 6.5 L10 13.5 L17 6.5"/></svg>
<svg style="left:1297.5px;top:498.5px;color:#7fb5c9;" width="17" height="17" viewBox="0 0 20 20" fill="currentColor"><rect x="1" y="1" width="18" height="18" rx="2.500"/></svg>
<svg style="left:1284.5px;top:532.5px;color:#e9e7f1;" width="13" height="13" viewBox="0 0 20 20" fill="none" stroke="currentColor" stroke-width="2.462" stroke-linecap="round"><path d="M3 6.5 L10 13.5 L17 6.5"/></svg>
<svg style="left:1309.0px;top:530.0px;color:#7fb5c9;" width="18" height="18" viewBox="0 0 20 20" fill="currentColor"><rect x="0.500" y="2" width="4.500" height="4.400" rx="0.600"/><rect x="6.500" y="2" width="13" height="4.400" rx="0.600"/><rect x="0.500" y="7.800" width="4.500" height="4.400" rx="0.600"/><rect x="6.500" y="7.800" width="13" height="4.400" rx="0.600"/><rect x="0.500" y="13.600" width="4.500" height="4.400" rx="0.600"/><rect x="6.500" y="13.600" width="13" height="4.400" rx="0.600"/></svg>
<svg style="left:1296.5px;top:564.5px;color:#e9e7f1;" width="13" height="13" viewBox="0 0 20 20" fill="none" stroke="currentColor" stroke-width="2.462" stroke-linecap="round"><path d="M3 6.5 L10 13.5 L17 6.5"/></svg>
<svg style="left:1321.0px;top:562.0px;color:#7fb5c9;" width="18" height="18" viewBox="0 0 20 20" fill="currentColor"><circle cx="10" cy="2.9" r="2.9"/><circle cx="10" cy="10" r="2.9"/><circle cx="10" cy="17.1" r="2.9"/></svg>
<svg style="left:1309.5px;top:596.5px;color:#7a7790;" width="13" height="13" viewBox="0 0 20 20" fill="none" stroke="currentColor" stroke-width="2.154" stroke-linecap="round"><path d="M7 3 L14 10 L7 17"/></svg>
<svg style="left:1333.5px;top:594.5px;color:#7fb5c9;" width="17" height="17" viewBox="0 0 20 20" fill="currentColor"><rect x="0.500" y="1" width="19" height="2.400"/><rect x="8" y="6.200" width="11.500" height="2.400"/><rect x="8" y="11.400" width="11.500" height="2.400"/><rect x="0.500" y="16.600" width="19" height="2.400"/><path d="M0.500 5.800 L5.800 10 L0.500 14.200 Z"/></svg>
<svg style="left:1309.5px;top:628.5px;color:#7a7790;" width="13" height="13" viewBox="0 0 20 20" fill="none" stroke="currentColor" stroke-width="2.154" stroke-linecap="round"><path d="M7 3 L14 10 L7 17"/></svg>
<svg style="left:1333.5px;top:626.5px;color:#7fb5c9;" width="17" height="17" viewBox="0 0 20 20" fill="currentColor"><rect x="0.500" y="1" width="19" height="2.400"/><rect x="8" y="6.200" width="11.500" height="2.400"/><rect x="8" y="11.400" width="11.500" height="2.400"/><rect x="0.500" y="16.600" width="19" height="2.400"/><path d="M0.500 5.800 L5.800 10 L0.500 14.200 Z"/></svg>
<svg style="left:1309.5px;top:660.5px;color:#7a7790;" width="13" height="13" viewBox="0 0 20 20" fill="none" stroke="currentColor" stroke-width="2.154" stroke-linecap="round"><path d="M7 3 L14 10 L7 17"/></svg>
<svg style="left:1333.5px;top:658.5px;color:#7fb5c9;" width="17" height="17" viewBox="0 0 20 20" fill="currentColor"><rect x="0.500" y="1" width="19" height="2.400"/><rect x="8" y="6.200" width="11.500" height="2.400"/><rect x="8" y="11.400" width="11.500" height="2.400"/><rect x="0.500" y="16.600" width="19" height="2.400"/><path d="M0.500 5.800 L5.800 10 L0.500 14.200 Z"/></svg>
<svg style="left:1297.5px;top:690.5px;color:#7fb5c9;" width="17" height="17" viewBox="0 0 20 20" fill="currentColor"><rect x="1.500" y="8.200" width="17" height="3.600" rx="1.800"/></svg>
<svg style="left:1880.5px;top:286.5px;color:#fff;" width="9" height="9" viewBox="0 0 20 20" fill="none" stroke="currentColor" stroke-width="3.778" stroke-linecap="round"><path d="M3 6.5 L10 13.5 L17 6.5"/></svg>
<svg style="left:1880.5px;top:565.0px;color:#fff;" width="9" height="9" viewBox="0 0 20 20" fill="none" stroke="currentColor" stroke-width="3.778" stroke-linecap="round"><path d="M3 6.5 L10 13.5 L17 6.5"/></svg>
<svg style="left:1880.5px;top:611.0px;color:#fff;" width="9" height="9" viewBox="0 0 20 20" fill="none" stroke="currentColor" stroke-width="3.778" stroke-linecap="round"><path d="M3 6.5 L10 13.5 L17 6.5"/></svg>
<svg style="left:1883.5px;top:515.5px;color:#a9b35c;" width="11" height="11" viewBox="0 0 20 20" fill="currentColor"><path d="M6.500 1 H13.500 L10.800 7.500 H15.200 L6 19 L8.300 10.500 H4.300 Z"/></svg>
<svg style="left:1564.0px;top:708.5px;color:#fff;" width="12" height="12" viewBox="0 0 20 20" fill="none" stroke="currentColor" stroke-width="3.333" stroke-linecap="round"><path d="M4.500 10.500 L8.500 14.500 L15.500 6"/></svg>
<svg style="left:1878.5px;top:713.5px;color:#fff;" width="9" height="9" viewBox="0 0 20 20" fill="none" stroke="currentColor" stroke-width="3.778" stroke-linecap="round"><path d="M3 6.5 L10 13.5 L17 6.5"/></svg>
<svg style="left:1564.0px;top:754.5px;color:#fff;" width="12" height="12" viewBox="0 0 20 20" fill="none" stroke="currentColor" stroke-width="3.333" stroke-linecap="round"><path d="M4.500 10.500 L8.500 14.500 L15.500 6"/></svg>
<svg style="left:1878.5px;top:759.5px;color:#fff;" width="9" height="9" viewBox="0 0 20 20" fill="none" stroke="currentColor" stroke-width="3.778" stroke-linecap="round"><path d="M3 6.5 L10 13.5 L17 6.5"/></svg>
<svg style="left:1564.0px;top:800.5px;color:#fff;" width="12" height="12" viewBox="0 0 20 20" fill="none" stroke="currentColor" stroke-width="3.333" stroke-linecap="round"><path d="M4.500 10.500 L8.500 14.500 L15.500 6"/></svg>
<svg style="left:1878.5px;top:805.5px;color:#fff;" width="9" height="9" viewBox="0 0 20 20" fill="none" stroke="currentColor" stroke-width="3.778" stroke-linecap="round"><path d="M3 6.5 L10 13.5 L17 6.5"/></svg>
<svg style="left:1881.5px;top:663.5px;color:#fff;" width="15" height="15" viewBox="0 0 20 20" fill="none" stroke="currentColor" stroke-width="2.000" stroke-linecap="round"><path d="M10 2.5 V17.5 M2.5 10 H17.5"/></svg>
<svg style="left:1881.5px;top:858.5px;color:#fff;" width="15" height="15" viewBox="0 0 20 20" fill="none" stroke="currentColor" stroke-width="2.000" stroke-linecap="round"><path d="M10 2.5 V17.5 M2.5 10 H17.5"/></svg>
<svg style="left:1881.5px;top:915.5px;color:#fff;" width="15" height="15" viewBox="0 0 20 20" fill="none" stroke="currentColor" stroke-width="2.000" stroke-linecap="round"><path d="M10 2.5 V17.5 M2.5 10 H17.5"/></svg>
<svg style="left:1881.5px;top:972.5px;color:#fff;" width="15" height="15" viewBox="0 0 20 20" fill="none" stroke="currentColor" stroke-width="2.000" stroke-linecap="round"><path d="M10 2.5 V17.5 M2.5 10 H17.5"/></svg>
<svg style="left:1881.5px;top:1029.5px;color:#fff;" width="15" height="15" viewBox="0 0 20 20" fill="none" stroke="currentColor" stroke-width="2.000" stroke-linecap="round"><path d="M10 2.5 V17.5 M2.5 10 H17.5"/></svg>
<div style="left:1556px;top:1038px;width:364px;height:1px;background:#000;"></div>
<div style="left:1556px;top:1039px;width:364px;height:41px;background:#1e1a30;"></div>
<span class="t" style="left:22px;top:1055px;font-size:12.5px;line-height:12.5px;color:#e9e7f1;letter-spacing:-0.828px;">7.1.2</span>
<span class="t" style="left:115px;top:1053px;font-size:14px;line-height:14px;color:#e9e7f1;letter-spacing:0.083px;">development</span>
<span class="t" style="left:254px;top:1053px;font-size:14px;line-height:14px;color:#9b7ff7;letter-spacing:-0.145px;">android 6.0.0</span>
<span class="t" style="left:556px;top:1053px;font-size:14px;line-height:14px;color:#4a4563;letter-spacing:0.016px;">Target</span>
<span class="t" style="left:1557px;top:1053px;font-size:14px;line-height:14px;color:#9b7ff7;letter-spacing:0.394px;">Output</span>
<span class="t" style="left:1646px;top:1053px;font-size:14px;line-height:14px;color:#e9e7f1;letter-spacing:-0.129px;">Terminal</span>
<span class="t" style="left:1747px;top:1053px;font-size:14px;line-height:14px;color:#e9e7f1;letter-spacing:-0.477px;">System Check</span>
<svg style="left:80.0px;top:1050.0px;color:#d6d4df;" width="20" height="20" viewBox="0 0 20 20" fill="none" stroke="currentColor" stroke-width="1.200" stroke-linecap="round"><path d="M1.800 8.500 A8.400 8.400 0 0 1 17.500 6 M18.500 1.500 V6.500 H13.500"/><path d="M18.200 11.500 A8.400 8.400 0 0 1 2.500 14 M1.500 18.500 V13.500 H6.500"/></svg>
<svg style="left:203.0px;top:1054.0px;color:#b7b5c2;" width="12" height="12" viewBox="0 0 20 20" fill="currentColor"><path d="M3 6.500 H17 L10 14.500 Z"/></svg>
<svg style="left:227.5px;top:1050.0px;color:#9b7ff7;" width="20" height="20" viewBox="0 0 20 20" fill="none" stroke="currentColor" stroke-width="1.200" stroke-linecap="round"><path d="M10 1 L18.500 5.300 V14.700 L10 19 L1.500 14.700 V5.300 Z M1.500 5.300 L10 9.600 L18.500 5.300 M10 9.600 V19" stroke-linejoin="round"/></svg>
<div style="left:339.5px;top:1048px;width:15px;height:15px;border-radius:8px;background:#9b7ff7;"></div>
<span class="t" style="left:344.5px;top:1052px;font-size:9px;line-height:9px;color:#fff;font-weight:700;">2</span>
<svg style="left:361.0px;top:1054.0px;color:#b7b5c2;" width="12" height="12" viewBox="0 0 20 20" fill="currentColor"><path d="M3 6.500 H17 L10 14.500 Z"/></svg>
<svg style="left:388.5px;top:1053.5px;color:#fff;" width="13" height="13" viewBox="0 0 20 20" fill="none" stroke="currentColor" stroke-width="2.462" stroke-linecap="round"><path d="M3.5 3.5 L16.5 16.5 M16.5 3.5 L3.5 16.5"/></svg>
<svg style="left:419.5px;top:1050.5px;color:#d6d4df;" width="19" height="19" viewBox="0 0 20 20" fill="none" stroke="currentColor" stroke-width="1.263" stroke-linecap="round"><path d="M10 19 V1.500 M5.500 6 L10 1.500 L14.500 6 M6.500 19 H10"/></svg>
<svg style="left:454.5px;top:1050.5px;color:#d6d4df;" width="19" height="19" viewBox="0 0 20 20" fill="none" stroke="currentColor" stroke-width="1.263" stroke-linecap="round"><path d="M5.500 6 Q5.500 1.500 10 1.500 Q14.500 1.500 14.500 5.500 Q14.500 8 12 9.500 Q10.800 10.300 10.800 12 H9.200 Q9.200 9.500 10.800 8.300 Q12.700 7 12.700 5.500 Q12.700 3.200 10 3.200 Q7.300 3.200 7.300 6 Z" stroke-linejoin="round"/><circle cx="10" cy="16.500" r="1.700"/></svg>
<svg style="left:497.0px;top:1050.0px;color:#d6d4df;" width="20" height="20" viewBox="0 0 20 20" fill="none" stroke="currentColor" stroke-width="1.200" stroke-linecap="round"><path d="M9.500 2 L16 8.500 L18.500 7.500 L19 9 L15 13 L13.500 12.500 L14.300 10.300 L12.500 8.500 L4 18.500 Q2.500 19.500 1.300 18.300 Q0.500 17 1.500 16 L11 7 L8 4 Z" stroke-linejoin="round"/></svg>
<svg style="left:533.0px;top:1053.0px;color:#464160;" width="14" height="14" viewBox="0 0 20 20" fill="none" stroke="currentColor" stroke-width="1.714" stroke-linecap="round"><path d="M7 3 L14 10 L7 17"/></svg>
<div style="left:600px;top:1048px;width:15px;height:15px;border-radius:8px;background:#2d2750;"></div>
<span class="t" style="left:605px;top:1052px;font-size:9px;line-height:9px;color:#4a4563;font-weight:700;">0</span>
<svg style="left:622.0px;top:1054.0px;color:#464160;" width="12" height="12" viewBox="0 0 20 20" fill="currentColor"><path d="M3 6.500 H17 L10 14.500 Z"/></svg>
<svg style="left:655.0px;top:1050.0px;color:#fff;" width="20" height="20" viewBox="0 0 20 20" fill="none" stroke="currentColor" stroke-width="1.300" stroke-linecap="round"><path d="M3.500 1.500 L17.500 10 L3.500 18.500 Z" stroke-linejoin="round"/></svg>
<svg style="left:698.0px;top:1049.5px;color:#9b7ff7;" width="21" height="21" viewBox="0 0 20 20" fill="none" stroke="currentColor" stroke-width="1.143" stroke-linecap="round"><path d="M6 6 A4 4.500 0 0 1 14 6 Z M5.500 6 H14.500 V14 A4.500 5 0 0 1 5.500 14 Z M10 6 V19 M5.500 10 H1.500 M14.500 10 H18.500 M5.500 7.500 L2.500 4.500 M14.500 7.500 L17.500 4.500 M5.700 14.500 L2.500 17.500 M14.300 14.500 L17.500 17.500" stroke-linejoin="round"/></svg>
<svg style="left:735.0px;top:1050.0px;color:#d6d4df;" width="20" height="20" viewBox="0 0 20 20" fill="none" stroke="currentColor" stroke-width="1.200" stroke-linecap="round"><path d="M11 2.500 H3 Q1.500 2.500 1.500 4 V17 Q1.500 18.500 3 18.500 H13.500 Q15 18.500 15 17 V14.500"/><path d="M12.500 1 L19.300 7.200 L12.500 13.400 V10 Q7 9.600 5.200 14.500 Q4.500 5.500 12.500 4.600 Z" stroke-linejoin="round"/></svg>
<svg style="left:1416.5px;top:1050.5px;color:#d6d4df;" width="19" height="19" viewBox="0 0 20 20" fill="none" stroke="currentColor" stroke-width="1.158" stroke-linecap="round"><path d="M7.500 3.500 L9.200 8.800 L14.500 10.500 L9.200 12.200 L7.500 17.500 L5.800 12.200 L0.500 10.500 L5.800 8.800 Z M15.500 0.800 L16.300 3 L18.500 3.800 L16.300 4.600 L15.500 6.800 L14.700 4.600 L12.500 3.800 L14.700 3 Z M15.500 13.200 L16.300 15.400 L18.500 16.200 L16.300 17 L15.500 19.200 L14.700 17 L12.500 16.200 L14.700 15.400 Z" stroke-linejoin="round"/></svg>
<svg style="left:1450.5px;top:1050.5px;color:#d6d4df;" width="19" height="19" viewBox="0 0 20 20" fill="none" stroke="currentColor" stroke-width="1.263" stroke-linecap="round"><path d="M1 8.500 H5.500 V18.500 H1 Z M5.500 9 L9.500 1.500 Q12.500 1.500 11.800 4.500 L11 7.500 H17 Q19 7.500 18.600 9.500 L17.200 17 Q16.800 18.500 15 18.500 H5.500" stroke-linejoin="round"/><rect x="2.300" y="15" width="1.600" height="1.600"/></svg>
<svg style="left:1486.0px;top:1049.0px;color:#d6d4df;" width="20" height="20" viewBox="0 0 20 20" fill="none" stroke="currentColor" stroke-width="1.100" stroke-linecap="round"><path d="M19.500 0.500 L11.500 7.500 M9.500 6.500 L13 10 L11.800 11.200 L8.300 7.700 Z M8.300 7.700 Q3 8.500 0.800 14.500 Q3 14 4 12.800 Q3.300 15.500 2 17.500 L7 18.500 Q11 16 11.800 11.200" stroke-linejoin="round"/></svg>
<svg style="left:1533.0px;top:1052.0px;color:#9b7ff7;" width="16" height="16" viewBox="0 0 20 20" fill="none" stroke="currentColor" stroke-width="1.625" stroke-linecap="round"><path d="M1 3.500 H19 M1 10 H19 M1 16.500 H19"/></svg>
<svg style="left:1616.2px;top:1048.8px;color:#d6d4df;" width="22.5" height="22.5" viewBox="0 0 20 20" fill="none" stroke="currentColor" stroke-width="1.067" stroke-linecap="round"><path d="M0.800 3 L8.300 10 L0.800 17 M10 17.300 H19.500"/></svg>
<svg style="left:1721.5px;top:1052.5px;color:#d6d4df;" width="15" height="15" viewBox="0 0 20 20" fill="none" stroke="currentColor" stroke-width="1.733" stroke-linecap="round"><path d="M1 11 L7 17.500 L19 2.500"/></svg>
<svg style="left:1855.5px;top:1050.5px;color:#d6d4df;" width="19" height="19" viewBox="0 0 20 20" fill="none" stroke="currentColor" stroke-width="1.263" stroke-linecap="round"><path d="M12 1.500 L19 8.500 L10 17.500 H5 L1 13 Z M6 8 L13 15 M5 17.500 H18" stroke-linejoin="round"/></svg>
<svg style="left:1889.0px;top:1051.0px;color:#d6d4df;" width="18" height="18" viewBox="0 0 20 20" fill="none" stroke="currentColor" stroke-width="1.333" stroke-linecap="round"><path d="M3 13.5 L10 6.5 L17 13.5"/></svg>
<svg style="left:121.5px;top:970.0px;color:#0a7aff;" width="27" height="27" viewBox="0 0 20 20" stroke-width="0.889" stroke-linecap="round"><path d="M10 1 L13.500 4 V2.500 H16.300 V6.500 L19.800 9.500 H17.500 V19 H2.500 V9.500 H0.200 Z" fill="currentColor"/><rect x="11.300" y="11.300" width="2.600" height="5.200" fill="#f6f6f9"/></svg>
<svg style="left:1116.0px;top:247.5px;color:#e9e7f1;" width="17" height="17" viewBox="0 0 20 20" fill="none" stroke="currentColor" stroke-width="1.529" stroke-linecap="round"><rect x="4" y="4" width="12" height="12"/></svg>
<svg style="left:1150.5px;top:249.5px;color:#fff;" width="13" height="13" viewBox="0 0 20 20" fill="none" stroke="currentColor" stroke-width="2.462" stroke-linecap="round"><path d="M3.5 3.5 L16.5 16.5 M16.5 3.5 L3.5 16.5"/></svg>
<svg style="left:1142.5px;top:286.5px;color:#a9a7b5;" width="12" height="12" viewBox="0 0 20 20" fill="currentColor"><path d="M3 6.500 H17 L10 14.500 Z"/></svg>
<svg style="left:827.5px;top:325.5px;color:#fff;" width="15" height="15" viewBox="0 0 20 20" fill="none" stroke="currentColor" stroke-width="2.000" stroke-linecap="round"><path d="M10 2.5 V17.5 M2.5 10 H17.5"/></svg>
<svg style="left:861.8px;top:326.8px;color:#fff;" width="12.5" height="12.5" viewBox="0 0 20 20" fill="none" stroke="currentColor" stroke-width="2.400" stroke-linecap="round"><path d="M3.5 3.5 L16.5 16.5 M16.5 3.5 L3.5 16.5"/></svg>
<svg style="left:1075.5px;top:324.5px;color:#d6d4df;" width="17" height="17" viewBox="0 0 20 20" fill="none" stroke="currentColor" stroke-width="1.412" stroke-linecap="round"><rect x="1.500" y="1.500" width="17" height="17" rx="2"/><path d="M5.500 10 H14.500"/></svg>
<svg style="left:1109.5px;top:324.5px;color:#d6d4df;" width="17" height="17" viewBox="0 0 20 20" fill="none" stroke="currentColor" stroke-width="1.412" stroke-linecap="round"><rect x="1.500" y="1.500" width="17" height="17" rx="2"/><path d="M5.500 10 H14.500 M10 5.500 V14.500"/></svg>
<svg style="left:1143.5px;top:324.5px;color:#d6d4df;" width="17" height="17" viewBox="0 0 20 20" fill="none" stroke="currentColor" stroke-width="1.412" stroke-linecap="round"><path d="M1.500 4 H18.500 M7 4 V1.500 H13 V4 M3.500 4 L5 18.500 H15 L16.500 4" stroke-linejoin="round"/></svg>
<svg style="left:823.5px;top:369.5px;color:#e9e7f1;" width="13" height="13" viewBox="0 0 20 20" fill="none" stroke="currentColor" stroke-width="2.308" stroke-linecap="round"><path d="M3 6.5 L10 13.5 L17 6.5"/></svg>
<svg style="left:847.0px;top:366.0px;color:#d6d4df;" width="20" height="20" viewBox="0 0 20 20" fill="none" stroke="currentColor" stroke-width="1.100" stroke-linecap="round"><path d="M10 1 L18.500 5.300 V14.700 L10 19 L1.500 14.700 V5.300 Z M1.500 5.300 L10 9.600 L18.500 5.300 M10 9.600 V19" stroke-linejoin="round"/></svg>
<svg style="left:861.0px;top:400.0px;color:#fff;" width="16" height="16" viewBox="0 0 20 20" stroke-width="1.375" stroke-linecap="round"><path d="M1.500 18.500 H6 M12.500 18.500 H18.500 M3.800 18.500 L9.800 1.500 L16 18.500 M5.800 12.800 H13.800" fill="none" stroke="currentColor"/></svg>
<svg style="left:934.0px;top:719.5px;color:#fff;" width="14" height="14" viewBox="0 0 20 20" stroke-width="1.429" stroke-linecap="round"><path d="M1.500 18.500 H6 M12.500 18.500 H18.500 M3.800 18.500 L9.800 1.500 L16 18.500 M5.800 12.800 H13.800" fill="none" stroke="currentColor"/></svg>
<svg style="left:1134.5px;top:725.5px;color:#fff;" width="9" height="9" viewBox="0 0 20 20" fill="none" stroke="currentColor" stroke-width="3.778" stroke-linecap="round"><path d="M3 6.5 L10 13.5 L17 6.5"/></svg>
<svg style="left:20px;top:56px;" width="28" height="32" viewBox="0 0 28 32"><path d="M2.2 8 V26.500 Q2.200 29.800 5.500 29.800 H20.500" fill="none" stroke="#7db4d6" stroke-width="2.400" stroke-linecap="round"/><path d="M9.500 1 H21 L27 7 V22.500 Q27 25.500 24 25.500 H9.500 Q6.500 25.500 6.500 22.500 V4 Q6.500 1 9.500 1 Z" fill="#4f6a86"/><path d="M21 1 L27 7 H22.500 Q21 7 21 5.500 Z" fill="#7db4d6"/></svg>
<svg style="left:19px;top:105px;" width="30" height="34" viewBox="0 0 30 34"><path d="M6.500 11 V23 M23.500 11 Q23.500 18.500 15 18.500 Q6.500 18.500 6.500 23" fill="none" stroke="#8b6a55" stroke-width="3.600"/><g fill="#1e1a30" stroke="#f6bb72" stroke-width="3"><circle cx="6.500" cy="6.500" r="3.200"/><circle cx="23.500" cy="6.500" r="3.200"/><circle cx="6.500" cy="27.500" r="3.200"/></g></svg>
<svg style="left:18px;top:158px;" width="32" height="28" viewBox="0 0 32 28"><path d="M6 6.500 H27 M6 6.500 L16 21.500" stroke="#6c7a4c" stroke-width="3.200" fill="none"/><g fill="#a4b463"><rect x="1" y="2" width="9.500" height="9.500" rx="2.500"/><rect x="22" y="2" width="9.500" height="9.500" rx="2.500"/><rect x="11.500" y="17" width="9.500" height="9.500" rx="2.500"/></g></svg>
<svg style="left:20px;top:206px;" width="28" height="32" viewBox="0 0 28 32"><path d="M1 7 V25.500 A13 5.200 0 0 0 27 25.500 V7 Z" fill="#86c6c1"/><path d="M1 6.500 A13 5.500 0 0 1 27 6.500 V9.500 A13 5.200 0 0 1 1 9.500 Z" fill="#4f6f7b"/><ellipse cx="14" cy="6.500" rx="13" ry="5.500" fill="#4f6f7b"/><path d="M0 10.800 A14 5.600 0 0 0 28 10.800" fill="none" stroke="#1e1a30" stroke-width="1.900"/><path d="M0 19.300 A14 5.600 0 0 0 28 19.300" fill="none" stroke="#1e1a30" stroke-width="1.900"/></svg>
<svg style="left:18px;top:256px;" width="32" height="32" viewBox="0 0 32 32"><rect x="14.800" y="0.500" width="2.600" height="30.500" rx="1" fill="#8b5a3c"/><path d="M4 3 H26 L30.500 6.500 L26 10 H4 Q3 10 3 9 V4 Q3 3 4 3 Z" fill="#e0964b"/><path d="M28 14 H6 L1.500 17.500 L6 21 H28 Q29 21 29 20 V15 Q29 14 28 14 Z" fill="#e0964b"/></svg>
<svg style="left:18px;top:306px;" width="32" height="32" viewBox="0 0 32 32"><path d="M12 12 L19 5 Q20.500 3.800 22 5 L27 10.500 Q28 12 27 13 L13 27 Z" fill="#6c4f7c"/><path d="M13 30 L23.500 19.500 H29 Q31 19.500 31 21.500 V28 Q31 30 29 30 Z" fill="#6c4f7c"/><rect x="1" y="1" width="11.500" height="29.500" rx="3" fill="#c48cbe"/><rect x="4.500" y="4.500" width="4.500" height="4.500" fill="#8e6590"/><rect x="4.500" y="12" width="4.500" height="4.500" fill="#8e6590"/><circle cx="6.800" cy="24.500" r="1.800" fill="#5a3f66"/></svg>
<svg style="left:18px;top:360px;" width="32" height="32" viewBox="0 0 32 32"><path d="M16 17 L31 24 L16 31 L1 24 Z" fill="#86c6c1"/><path d="M16 9.500 L31 16.500 L16 23.500 L1 16.500 Z" fill="#4f6f7b" stroke="#1e1a30" stroke-width="1.600"/><path d="M16 0.800 L31 8 L16 15.200 L1 8 Z" fill="#86c6c1" stroke="#1e1a30" stroke-width="1.600"/></svg>
<svg style="left:15px;top:410px;" width="40" height="32" viewBox="0 0 40 32"><rect x="18.700" y="1" width="2.600" height="6" rx="1" fill="#8b6a55"/><rect x="1" y="13.500" width="4" height="11.500" rx="2" fill="#8b6a55"/><rect x="35" y="13.500" width="4" height="11.500" rx="2" fill="#8b6a55"/><rect x="6.500" y="6" width="27" height="25" rx="5" fill="#f6c98b"/><circle cx="14" cy="16" r="2.200" fill="#1e1a30"/><circle cx="26" cy="16" r="2.200" fill="#1e1a30"/><rect x="12" y="23" width="4" height="2.200" fill="#a88660"/><rect x="18" y="23" width="4" height="2.200" fill="#a88660"/><rect x="24" y="23" width="4" height="2.200" fill="#a88660"/></svg>
<svg style="left:17px;top:888px;" width="32" height="32" viewBox="0 0 32 32"><path d="M1 9 Q1 6 4 6 H9 Q7.500 3 10.500 2.500 Q13.500 3 12 6 H15.500 V11 Q18.500 9.500 19 12.500 Q18.500 15.500 15.500 14 V19 H11.500 Q13 22 10 22.500 Q7 22 8.500 19 H1 Z" fill="#cfcdd8"/><path d="M1 19 H8.500 Q7 22 10 22.500 Q13 22 11.500 19 H15.500 V31 H4 Q1 31 1 28 Z" fill="#6d6a82"/><path d="M15.500 19 V14 Q18.500 15.500 19 12.500 H23 Q21.500 15.500 24.500 16 Q27.500 15.500 26 12.500 L27 19 V28 Q27 31 24 31 H15.500 Z" fill="#cfcdd8"/><path d="M19 3 H23 Q21.500 0 24.500 -0.500 Q27.500 0 26 3 H28 Q31 3 31 6 V12.500 H26 Q27.500 15.500 24.500 16 Q21.500 15.500 23 12.500 H19 Q18.500 9.500 15.500 11 V6 Q16 3 19 3 Z" fill="#6d6a82" transform="translate(0,1)"/></svg>
<svg style="left:17px;top:939px;color:#cfcdd8" width="30" height="30" viewBox="0 0 20 20"><path d="M8.24 2.92 L8.11 0.59 L11.89 0.59 L11.76 2.92 L13.77 3.75 L15.32 2.01 L17.99 4.68 L16.25 6.23 L17.08 8.24 L19.41 8.11 L19.41 11.89 L17.08 11.76 L16.25 13.77 L17.99 15.32 L15.32 17.99 L13.77 16.25 L11.76 17.08 L11.89 19.41 L8.11 19.41 L8.24 17.08 L6.23 16.25 L4.68 17.99 L2.01 15.32 L3.75 13.77 L2.92 11.76 L0.59 11.89 L0.59 8.11 L2.92 8.24 L3.75 6.23 L2.01 4.68 L4.68 2.01 L6.23 3.75Z" fill="currentColor" stroke="currentColor" stroke-width="1.500" stroke-linejoin="round"/><circle cx="10" cy="10" r="2.500" fill="#5d5a72"/></svg>
<div style="left:37px;top:936px;width:22px;height:14px;background:#e9be7e;border-radius:7px;"></div>
<span class="t" style="left:40.5px;top:939px;font-size:10px;line-height:10px;color:#2a2030;letter-spacing:-0.867px;">Exp</span>
<div style="left:14px;top:992px;width:36px;height:36px;background:#cfcdd8;border-radius:18px;"></div>
<svg style="left:16.500px;top:995px" width="31" height="29.500" viewBox="0 0 21 20"><path d="M3.500 7.500 L7.300 15.800" stroke="url(#g1)" stroke-width="5" stroke-linecap="round"/><path d="M9.800 5.800 L8.300 15.800" stroke="url(#g2)" stroke-width="5" stroke-linecap="round"/><path d="M16.200 4 L14.300 15.800" stroke="url(#g3)" stroke-width="5.400" stroke-linecap="round"/></svg>
<div style="left:38px;top:988px;width:21px;height:16px;background:#c9433f;border-radius:8px;"></div>
<span class="t" style="left:41.5px;top:991px;font-size:10.5px;line-height:10.5px;color:#fff;letter-spacing:-0.922px;">Pro</span>
<svg style="left:0;top:0" width="0" height="0"><defs><filter id="bl" x="0" y="0" width="1" height="1"><feGaussianBlur stdDeviation="0.7"/></filter></defs></svg>
<svg style="left:145px;top:324px;overflow:hidden" width="44" height="44" viewBox="0 0 44 44"><g filter="url(#bl)"><rect x="-2" y="-2" width="48" height="48" fill="#060404"/><path d="M-2 21 L46 13 V21 L-2 31 Z" fill="#d8c3a0"/><path d="M-2 19 L46 11 V13.500 L-2 21.500 Z" fill="#6a5640"/><path d="M-2 30 L10 28 L20 30 L30 25 L46 21 V46 H-2 Z" fill="#050303"/><g fill="#f6efe2"><rect x="9" y="17" width="2" height="7"/><rect x="16" y="15.500" width="2" height="6.500"/><rect x="24" y="14" width="2" height="6"/><rect x="30" y="13" width="1.800" height="5.500"/><rect x="36" y="12" width="1.600" height="5"/><rect x="40.500" y="11" width="1.500" height="5"/></g><path d="M0 2.500 H44" stroke="#5a5048" stroke-width="1" stroke-dasharray="1 2"/></g></svg>
<svg style="left:145px;top:389px;overflow:hidden" width="44" height="44" viewBox="0 0 44 44"><g filter="url(#bl)"><rect x="-2" y="-2" width="48" height="48" fill="#262422"/><path d="M-2 -2 H46 V14 L-2 17 Z" fill="#2e2c2a"/><path d="M8 4 L30 2 M10 8 L26 5 M12 10 L20 3" stroke="#77726c" stroke-width="0.800"/><path d="M-2 16 L30 15 V27 L-2 26 Z" fill="#9a8ad0"/><path d="M-2 16 L10 15.500 V26 L-2 26 Z" fill="#7a5cc8"/><path d="M12 15.500 L22 15 V27 L12 26.500 Z" fill="#cdbfe6"/><path d="M30 14 H46 V30 H30 Z" fill="#171513"/><path d="M10 26.500 L46 29 V32 L18 31 Z" fill="#f0ece6"/><path d="M-2 26 L10 26.500 L26 46 H-2 Z" fill="#2a2623"/><path d="M18 31 L46 32 V46 H26 Z" fill="#0f0d0c"/><g fill="#3a7a8a"><rect x="25.500" y="18" width="1.800" height="9.500"/><rect x="33" y="17" width="2" height="11.500"/></g><g fill="#5a8a7a"><rect x="14" y="20" width="1.500" height="7"/><rect x="19" y="20" width="1.500" height="7"/></g></g></svg>
<svg style="left:145px;top:454px;overflow:hidden" width="44" height="44" viewBox="0 0 44 44"><g filter="url(#bl)"><rect x="-2" y="-2" width="48" height="48" fill="#8e6e5c"/><path d="M-2 -2 H46 V10 L-2 16 Z" fill="#a08070"/><path d="M-2 30 Q6 20 18 22 L28 30 L40 34 L46 46 H-2 Z" fill="#141a16"/><path d="M4 34 Q12 26 22 30 L30 36 Q20 44 6 42 Z" fill="#1e3a30"/><path d="M14 8 Q20 -1 29 6 Q33 12 27 17 Q18 20 14 14 Z" fill="#6a2418"/><ellipse cx="24.500" cy="13.500" rx="5" ry="6" fill="#f2d6c0" transform="rotate(25 24.500 13.500)"/><path d="M26 19 Q36 18 44 24 V34 Q36 26 28 26 Z" fill="#e8c8b0"/><path d="M22 22 L27 25 L14 40 L8 42 Q8 38 12 36 Z" fill="#f0d4bc"/><path d="M-2 42 H46 V46 H-2 Z" fill="#7a5a4a"/></g></svg>
</body></html>
